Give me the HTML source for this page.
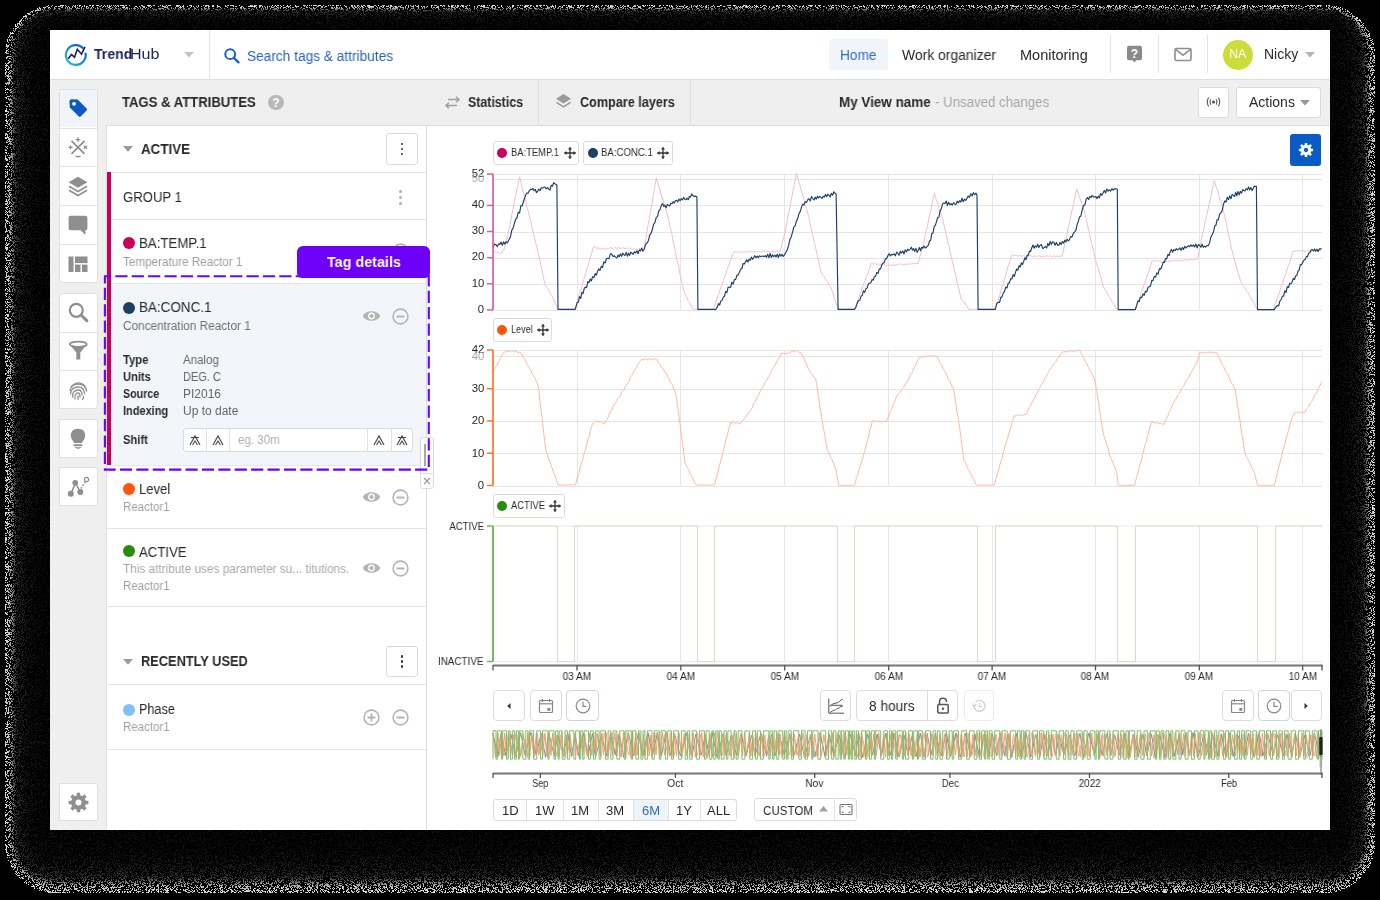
<!DOCTYPE html>
<html><head><meta charset="utf-8">
<style>
*{box-sizing:border-box;margin:0;padding:0}
html,body{width:1380px;height:900px;overflow:hidden;background:#000}
body{font-family:"Liberation Sans",sans-serif;position:relative}
#bg{position:absolute;left:0;top:0}
.r{position:absolute}
.t{position:absolute;white-space:nowrap;line-height:1;will-change:transform}
svg{position:absolute;overflow:visible}
</style></head><body>
<canvas id="bg" width="1380" height="900"></canvas>
<div class="r" style="left:50px;top:30px;width:1280px;height:800px;background:#fff"></div>
<div class="r" style="left:50px;top:79px;width:1280px;height:1px;background:#dedede"></div>
<div class="r" style="left:209px;top:30px;width:1px;height:49px;background:#e3e3e3"></div>
<div class="r" style="left:1110px;top:35px;width:1px;height:38px;background:#e3e3e3"></div>
<div class="r" style="left:1158px;top:35px;width:1px;height:38px;background:#e3e3e3"></div>
<div class="r" style="left:1207px;top:35px;width:1px;height:38px;background:#e3e3e3"></div>
<div class="r" style="left:829px;top:39px;width:59px;height:31px;background:#f1f5fa;border-radius:3px"></div>
<div class="r" style="left:50px;top:80px;width:57px;height:750px;background:#efefef"></div>
<div class="r" style="left:107px;top:80px;width:320px;height:45px;background:#efefef"></div>
<div class="r" style="left:106px;top:125px;width:321px;height:705px;background:#fff;border-left:1px solid #e2e2e2;border-right:1px solid #dcdcdc;border-top:1px solid #e0e0e0"></div>
<div class="r" style="left:427px;top:80px;width:903px;height:46px;background:#efefef;border-bottom:1px solid #dcdcdc"></div>
<div class="r" style="left:538px;top:80px;width:1px;height:45px;background:#dcdcdc"></div>
<div class="r" style="left:690px;top:80px;width:1px;height:45px;background:#dcdcdc"></div>
<svg style="left:62px;top:40px" width="28" height="28" viewBox="0 0 28 28"><defs><linearGradient id="lg" x1="0" y1="1" x2="1" y2="0"><stop offset="0" stop-color="#22c0e8"/><stop offset="1" stop-color="#1450b8"/></linearGradient></defs>
    <path d="M21.4 8.6 A9.9 9.9 0 1 0 23.5 12.8" fill="none" stroke="url(#lg)" stroke-width="2.1"/>
    <polyline points="6.3,18.7 9.5,14.5 12.5,17.3 15.3,9.3 19.5,14.2 23,6.8" fill="none" stroke="#1f1a5e" stroke-width="1.55" stroke-linejoin="miter"/></svg>
<svg style="left:184px;top:52px" width="10" height="6" viewBox="0 0 10 6"><path d="M0 0H10L5 5.5Z" fill="#c4c4c4"/></svg>
<svg style="left:224px;top:48px" width="16" height="15" viewBox="0 0 16 15"><circle cx="6.2" cy="6.2" r="4.9" fill="none" stroke="#1a64c0" stroke-width="2"/><path d="M9.8 9.8L14.5 14.3" stroke="#1a64c0" stroke-width="2.4" stroke-linecap="round"/></svg>
<svg style="left:1126px;top:45px" width="17" height="19" viewBox="0 0 17 19"><rect x="1" y="0.8" width="15" height="14.5" rx="2" fill="#8a8a8a"/><path d="M6.5 15H10.5L8.5 17.6Z" fill="#8a8a8a"/><text x="8.5" y="12.6" font-family="Liberation Sans" font-weight="bold" font-size="12" fill="#fff" text-anchor="middle">?</text></svg>
<svg style="left:1174px;top:47px" width="18" height="15" viewBox="0 0 18 15"><rect x="1" y="1.5" width="16" height="12" rx="1.5" fill="none" stroke="#8f8f8f" stroke-width="1.6"/><path d="M1.8 2.6L9 8.2L16.2 2.6" fill="none" stroke="#8f8f8f" stroke-width="1.6"/></svg>
<div class="r" style="left:1223.00px;top:39.50px;width:30px;height:30px;border-radius:50%;background:#cddc3a"></div>
<svg style="left:1305px;top:51.5px" width="10" height="6" viewBox="0 0 10 6"><path d="M0 0H10L5 5.5Z" fill="#b4b4b4"/></svg>
<div class="r" style="left:58.5px;top:88.6px;width:39.00px;height:194.50px;background:#fff;border:1px solid #e0e0e0;border-radius:3px"></div><div class="r" style="left:59px;top:127.5px;width:38.00px;height:1.00px;background:#e4e4e4"></div><div class="r" style="left:59px;top:166.39999999999998px;width:38.00px;height:1.00px;background:#e4e4e4"></div><div class="r" style="left:59px;top:205.29999999999998px;width:38.00px;height:1.00px;background:#e4e4e4"></div><div class="r" style="left:59px;top:244.2px;width:38.00px;height:1.00px;background:#e4e4e4"></div>
<div class="r" style="left:59.5px;top:89.6px;width:37.00px;height:37.90px;background:#f1f5fa;border-radius:2px 2px 0 0"></div>
<div class="r" style="left:58.5px;top:292.8px;width:39.00px;height:116.19px;background:#fff;border:1px solid #e0e0e0;border-radius:3px"></div><div class="r" style="left:59px;top:331.53000000000003px;width:38.00px;height:1.00px;background:#e4e4e4"></div><div class="r" style="left:59px;top:370.26px;width:38.00px;height:1.00px;background:#e4e4e4"></div>
<div class="r" style="left:58.5px;top:418.5px;width:39.00px;height:39.00px;background:#fff;border:1px solid #e0e0e0;border-radius:3px"></div>
<div class="r" style="left:58.5px;top:466.5px;width:39.00px;height:39.00px;background:#fff;border:1px solid #e0e0e0;border-radius:3px"></div>
<div class="r" style="left:58.5px;top:783px;width:39.00px;height:38.00px;background:#fff;border:1px solid #e0e0e0;border-radius:3px"></div>
<svg style="left:68px;top:98px" width="20" height="21" viewBox="0 0 20 21"><path d="M1.5 3.2 Q1.5 1.2 3.5 1.2 L9.6 1.4 L18.6 10.6 Q19.4 11.5 18.6 12.4 L12.6 18.6 Q11.7 19.5 10.8 18.6 L1.8 9.5 Z" fill="#0a5cc2"/><circle cx="6" cy="5.8" r="1.9" fill="#fff"/></svg>
<svg style="left:68px;top:137px" width="20" height="21" viewBox="0 0 20 21"><path d="M3.5 3.8L16.5 16.8M16.5 3.8L3.5 16.8" stroke="#8f8f8f" stroke-width="1.7"/><path d="M10 0.3V5M7.7 2.6H12.3M0.5 10.3H4.5M2.5 8.3V12.3M7.5 19.5H12.5M15.8 8.6L19 11.8M19 8.6L15.8 11.8" stroke="#8f8f8f" stroke-width="1.3"/></svg>
<svg style="left:68px;top:176px" width="20" height="21" viewBox="0 0 20 21"><path d="M10 0.8L19.4 6.3L10 11.8L0.6 6.3Z" fill="#8f8f8f"/><path d="M1 10.3L10 15.5L19 10.3" fill="none" stroke="#8f8f8f" stroke-width="1.6"/><path d="M1 14.3L10 19.5L19 14.3" fill="none" stroke="#8f8f8f" stroke-width="1.6"/></svg>
<svg style="left:68px;top:215px" width="20" height="21" viewBox="0 0 20 21"><path d="M2.5 0.8H17.5Q19.4 0.8 19.4 2.7V13.3Q19.4 15.2 17.5 15.2H17.4V20L12.6 15.2H2.5Q0.6 15.2 0.6 13.3V2.7Q0.6 0.8 2.5 0.8Z" fill="#8f8f8f"/></svg>
<svg style="left:68px;top:256px" width="20" height="17" viewBox="0 0 20 17"><rect x="0.5" y="0.5" width="5" height="15.5" fill="#8f8f8f"/><rect x="7" y="0.5" width="12.5" height="6.6" fill="#8f8f8f"/><rect x="7" y="8.6" width="5.5" height="7.4" fill="#8f8f8f"/><rect x="14" y="8.6" width="5.5" height="7.4" fill="#8f8f8f"/></svg>
<svg style="left:68px;top:302px" width="21" height="21" viewBox="0 0 21 21"><circle cx="8.3" cy="8.3" r="6.5" fill="none" stroke="#8f8f8f" stroke-width="2.2"/><path d="M13 13L18.8 18.6" stroke="#8f8f8f" stroke-width="3" stroke-linecap="round"/></svg>
<svg style="left:68px;top:341px" width="21" height="20" viewBox="0 0 21 20"><ellipse cx="10.3" cy="3.2" rx="8.5" ry="2.6" fill="#fff" stroke="#8f8f8f" stroke-width="1.8"/><path d="M1.8 3.5L8.3 11.5V18.5H12.3V11.5L18.8 3.5Q10.3 8 1.8 3.5Z" fill="#8f8f8f"/></svg>
<svg style="left:68px;top:380px" width="21" height="21" viewBox="0 0 21 21"><g fill="none" stroke="#8f8f8f" stroke-width="1.3" stroke-linecap="round"><path d="M3.5 6.5Q10 -0.5 17 6"/><path d="M2 10.5Q3 4 10.3 4Q17.5 4 18.5 11"/><path d="M2.5 14Q3 7 10.3 7Q16 7 16.5 13.5"/><path d="M4.5 17Q4.5 10 10.3 10Q14 10 14 15"/><path d="M7 19Q6.5 13 10.3 13Q12 13 12 17"/><path d="M10 16V19.5"/><path d="M15.5 16.5Q15.5 18.5 14.5 19.5"/></g></svg>
<svg style="left:69px;top:428px" width="18" height="21" viewBox="0 0 18 21"><path d="M9 0.8Q16.2 0.8 16.2 7.8Q16.2 11 13.3 13.8V15H4.7V13.8Q1.8 11 1.8 7.8Q1.8 0.8 9 0.8Z" fill="#8f8f8f"/><rect x="4.7" y="16.2" width="8.6" height="2" fill="#8f8f8f"/><path d="M4.7 19.2H13.3L9 21Z" fill="#8f8f8f"/></svg>
<svg style="left:67px;top:476px" width="23" height="22" viewBox="0 0 23 22"><path d="M8.5 7L4 17.5M8.5 7L13 15.5" stroke="#8f8f8f" stroke-width="1.6"/><path d="M14 12.5L18.5 5.5" stroke="#8f8f8f" stroke-width="1.5" stroke-dasharray="1.6 1.6"/><circle cx="8.2" cy="6.8" r="2.8" fill="#8f8f8f"/><circle cx="3.8" cy="17.8" r="3" fill="#8f8f8f"/><circle cx="13.3" cy="16" r="3" fill="#8f8f8f"/><circle cx="19.5" cy="3.5" r="2.1" fill="#fff" stroke="#8f8f8f" stroke-width="1.2"/></svg>
<svg style="left:68px;top:792px" width="21" height="21" viewBox="0 0 21 21"><path d="M17.69 8.74 L20.36 8.81 L20.36 12.19 L17.69 12.26 L16.83 14.34 L18.67 16.27 L16.27 18.67 L14.34 16.83 L12.26 17.69 L12.19 20.36 L8.81 20.36 L8.74 17.69 L6.66 16.83 L4.73 18.67 L2.33 16.27 L4.17 14.34 L3.31 12.26 L0.64 12.19 L0.64 8.81 L3.31 8.74 L4.17 6.66 L2.33 4.73 L4.73 2.33 L6.66 4.17 L8.74 3.31 L8.81 0.64 L12.19 0.64 L12.26 3.31 L14.34 4.17 L16.27 2.33 L18.67 4.73 L16.83 6.66Z" fill="#8f8f8f"/><circle cx="10.5" cy="10.5" r="6.00" fill="#8f8f8f"/><circle cx="10.5" cy="10.5" r="3.00" fill="#fff"/></svg>
<div class="r" style="left:268.05px;top:94.75px;width:15.5px;height:15.5px;border-radius:50%;background:#b8b8b8"></div>
<svg style="left:268px;top:95px" width="16" height="16" viewBox="0 0 16 16"><text x="8" y="12.3" font-family="Liberation Sans" font-weight="bold" font-size="12" fill="#fff" text-anchor="middle">?</text></svg>
<div class="r" style="left:107px;top:172px;width:319.00px;height:1.00px;background:#e6e6e6"></div>
<div class="r" style="left:107px;top:219px;width:319.00px;height:1.00px;background:#e6e6e6"></div>
<div class="r" style="left:107px;top:283px;width:319.00px;height:1.00px;background:#e6e6e6"></div>
<div class="r" style="left:107px;top:528px;width:319.00px;height:1.00px;background:#e6e6e6"></div>
<div class="r" style="left:107px;top:606px;width:319.00px;height:1.00px;background:#e6e6e6"></div>
<div class="r" style="left:107px;top:684px;width:319.00px;height:1.00px;background:#e6e6e6"></div>
<div class="r" style="left:107px;top:749px;width:319.00px;height:1.00px;background:#e6e6e6"></div>
<div class="r" style="left:107px;top:283.5px;width:319.00px;height:181.50px;background:#f2f5f9"></div>
<div class="r" style="left:107px;top:465px;width:319.00px;height:1.00px;background:#e6e6e6"></div>
<div class="r" style="left:107px;top:172px;width:4.00px;height:293.00px;background:#c8005a"></div>
<svg style="left:123px;top:145.5px" width="10" height="6" viewBox="0 0 10 6"><path d="M0 0H10L5 5.8Z" fill="#9a9a9a"/></svg>
<svg style="left:123px;top:659px" width="10" height="6" viewBox="0 0 10 6"><path d="M0 0H10L5 5.8Z" fill="#9a9a9a"/></svg>
<div class="r" style="left:386.3px;top:133.4px;width:31.40px;height:31.40px;background:#fff;border:1px solid #dadada;border-radius:3px"></div>
<div class="r" style="left:400.65px;top:142.75px;width:2.7px;height:2.7px;border-radius:50%;background:#333"></div>
<div class="r" style="left:400.65px;top:147.75px;width:2.7px;height:2.7px;border-radius:50%;background:#333"></div>
<div class="r" style="left:400.65px;top:152.75px;width:2.7px;height:2.7px;border-radius:50%;background:#333"></div>
<div class="r" style="left:386.3px;top:645.6px;width:31.40px;height:31.40px;background:#fff;border:1px solid #dadada;border-radius:3px"></div>
<div class="r" style="left:400.65px;top:654.95px;width:2.7px;height:2.7px;border-radius:50%;background:#333"></div>
<div class="r" style="left:400.65px;top:659.95px;width:2.7px;height:2.7px;border-radius:50%;background:#333"></div>
<div class="r" style="left:400.65px;top:664.95px;width:2.7px;height:2.7px;border-radius:50%;background:#333"></div>
<div class="r" style="left:398.50px;top:189.50px;width:3.0px;height:3.0px;border-radius:50%;background:#b0b0b0"></div>
<div class="r" style="left:398.50px;top:195.50px;width:3.0px;height:3.0px;border-radius:50%;background:#b0b0b0"></div>
<div class="r" style="left:398.50px;top:201.50px;width:3.0px;height:3.0px;border-radius:50%;background:#b0b0b0"></div>
<div class="r" style="left:123.00px;top:237.30px;width:12px;height:12px;border-radius:50%;background:#c8005a"></div>
<div class="r" style="left:123.00px;top:301.50px;width:12px;height:12px;border-radius:50%;background:#1d3f66"></div>
<div class="r" style="left:123.00px;top:483.30px;width:12px;height:12px;border-radius:50%;background:#ff5510"></div>
<div class="r" style="left:123.00px;top:545.00px;width:12px;height:12px;border-radius:50%;background:#2b8a10"></div>
<div class="r" style="left:123.00px;top:703.60px;width:12px;height:12px;border-radius:50%;background:#80c0f6"></div>
<svg style="left:391.5px;top:242.5px" width="17" height="17" viewBox="0 0 17 17"><circle cx="8.5" cy="8.5" r="7.4" fill="none" stroke="#b4b4b4" stroke-width="1.6"/><path d="M4.6 8.5H12.4" stroke="#b4b4b4" stroke-width="2"/></svg>
<svg style="left:362.0px;top:310px" width="19" height="12" viewBox="0 0 19 12"><path d="M0.8 6C3.5 -0.3 15.5 -0.3 18.2 6C15.5 12.3 3.5 12.3 0.8 6Z" fill="#b4b4b4"/><circle cx="9.5" cy="6" r="3.4" fill="#fff"/><circle cx="9.5" cy="6" r="2.1" fill="#b4b4b4"/></svg>
<svg style="left:391.5px;top:307.5px" width="17" height="17" viewBox="0 0 17 17"><circle cx="8.5" cy="8.5" r="7.4" fill="none" stroke="#b4b4b4" stroke-width="1.6"/><path d="M4.6 8.5H12.4" stroke="#b4b4b4" stroke-width="2"/></svg>
<svg style="left:362.0px;top:491.2px" width="19" height="12" viewBox="0 0 19 12"><path d="M0.8 6C3.5 -0.3 15.5 -0.3 18.2 6C15.5 12.3 3.5 12.3 0.8 6Z" fill="#b4b4b4"/><circle cx="9.5" cy="6" r="3.4" fill="#fff"/><circle cx="9.5" cy="6" r="2.1" fill="#b4b4b4"/></svg>
<svg style="left:391.5px;top:488.5px" width="17" height="17" viewBox="0 0 17 17"><circle cx="8.5" cy="8.5" r="7.4" fill="none" stroke="#b4b4b4" stroke-width="1.6"/><path d="M4.6 8.5H12.4" stroke="#b4b4b4" stroke-width="2"/></svg>
<svg style="left:362.0px;top:562px" width="19" height="12" viewBox="0 0 19 12"><path d="M0.8 6C3.5 -0.3 15.5 -0.3 18.2 6C15.5 12.3 3.5 12.3 0.8 6Z" fill="#b4b4b4"/><circle cx="9.5" cy="6" r="3.4" fill="#fff"/><circle cx="9.5" cy="6" r="2.1" fill="#b4b4b4"/></svg>
<svg style="left:391.5px;top:559.5px" width="17" height="17" viewBox="0 0 17 17"><circle cx="8.5" cy="8.5" r="7.4" fill="none" stroke="#b4b4b4" stroke-width="1.6"/><path d="M4.6 8.5H12.4" stroke="#b4b4b4" stroke-width="2"/></svg>
<svg style="left:363.0px;top:709.2px" width="17" height="17" viewBox="0 0 17 17"><circle cx="8.5" cy="8.5" r="7.4" fill="none" stroke="#b4b4b4" stroke-width="1.6"/><path d="M4.6 8.5H12.4M8.5 4.6V12.4" stroke="#b4b4b4" stroke-width="1.8"/></svg>
<svg style="left:391.5px;top:709.2px" width="17" height="17" viewBox="0 0 17 17"><circle cx="8.5" cy="8.5" r="7.4" fill="none" stroke="#b4b4b4" stroke-width="1.6"/><path d="M4.6 8.5H12.4" stroke="#b4b4b4" stroke-width="2"/></svg>
<div class="r" style="left:183.3px;top:428.3px;width:230.20px;height:23.40px;background:#fff;border:1px solid #dcdcdc;border-radius:3px"></div>
<div class="r" style="left:206.4px;top:429px;width:1.00px;height:22.00px;background:#e2e2e2"></div>
<div class="r" style="left:229.3px;top:429px;width:1.00px;height:22.00px;background:#e2e2e2"></div>
<div class="r" style="left:367.2px;top:429px;width:1.00px;height:22.00px;background:#e2e2e2"></div>
<div class="r" style="left:390.6px;top:429px;width:1.00px;height:22.00px;background:#e2e2e2"></div>
<svg style="left:187.8px;top:433px" width="14" height="14" viewBox="0 0 14 14"><path d="M2 12L7 3L12 12M4.5 12L7 8L9.5 12" fill="none" stroke="#444" stroke-width="1.1"/><path d="M3 4.5H11" stroke="#444" stroke-width="1.1"/></svg>
<svg style="left:210.8px;top:433px" width="14" height="14" viewBox="0 0 14 14"><path d="M2 12L7 3L12 12M4.5 12L7 8L9.5 12" fill="none" stroke="#444" stroke-width="1.1"/></svg>
<svg style="left:371.9px;top:433px" width="14" height="14" viewBox="0 0 14 14"><path d="M2 12L7 3L12 12M4.5 12L7 8L9.5 12" fill="none" stroke="#444" stroke-width="1.1"/></svg>
<svg style="left:395px;top:433px" width="14" height="14" viewBox="0 0 14 14"><path d="M2 12L7 3L12 12M4.5 12L7 8L9.5 12" fill="none" stroke="#444" stroke-width="1.1"/><path d="M3 4.5H11" stroke="#444" stroke-width="1.1"/></svg>
<div class="r" style="left:297px;top:245.8px;width:132.50px;height:32.00px;background:#6e00f8;border-radius:6px 6px 5px 5px"></div>
<div class="r" style="left:419.5px;top:437.4px;width:14.70px;height:51.40px;background:#fff;border:1px solid #dcdcdc;border-radius:3px"></div>
<div class="r" style="left:420px;top:472.6px;width:14.00px;height:1.00px;background:#e0e0e0"></div>
<div class="r" style="left:423.8px;top:444px;width:2.40px;height:22.00px;background:#a8a8a8"></div>
<svg style="left:423px;top:477px" width="8" height="8" viewBox="0 0 8 8"><path d="M1 1L7 7M7 1L1 7" stroke="#999" stroke-width="1.1"/></svg>
<svg style="left:0px;top:0px" width="1380" height="900" viewBox="0 0 1380 900"><rect x="104.9" y="276.2" width="323.9" height="193.4" fill="none" stroke="#6c00ff" stroke-width="2.1" stroke-dasharray="12.2 4.2" stroke-dashoffset="6"/></svg>
<svg style="left:444px;top:96px" width="17" height="13" viewBox="0 0 17 13"><path d="M4 3.5H15M12 0.8L15 3.5L12 6.2" fill="none" stroke="#a0a0a0" stroke-width="1.5"/><path d="M13 9.5H2M5 6.8L2 9.5L5 12.2" fill="none" stroke="#a0a0a0" stroke-width="1.5"/></svg>
<svg style="left:555px;top:93px" width="17" height="17" viewBox="0 0 17 17"><path d="M8.5 1L16 5.8L8.5 10.6L1 5.8Z" fill="#9a9a9a"/><path d="M1.5 9.3L8.5 13.8L15.5 9.3" fill="none" stroke="#9a9a9a" stroke-width="1.6"/></svg>
<div class="r" style="left:1197.7px;top:87.3px;width:31.10px;height:30.40px;background:#fff;border:1px solid #dcdcdc;border-radius:3px"></div>
<svg style="left:1206px;top:96px" width="15" height="12" viewBox="0 0 15 12"><circle cx="7.5" cy="6" r="1.6" fill="#555"/><path d="M4.8 3.3Q3.2 6 4.8 8.7M10.2 3.3Q11.8 6 10.2 8.7M2.6 1.5Q0 6 2.6 10.5M12.4 1.5Q15 6 12.4 10.5" fill="none" stroke="#555" stroke-width="1.1"/></svg>
<div class="r" style="left:1236px;top:87.3px;width:85.00px;height:30.40px;background:#fff;border:1px solid #dcdcdc;border-radius:3px"></div>
<svg style="left:1300px;top:100px" width="10" height="6" viewBox="0 0 10 6"><path d="M0 0H10L5 5.5Z" fill="#9a9a9a"/></svg>
<div class="r" style="left:1290.3px;top:134px;width:31.10px;height:32.00px;background:#0a5bc4;border-radius:3px"></div>
<svg style="left:1298px;top:142px" width="16" height="16" viewBox="0 0 16 16"><path d="M13.18 6.73 L15.10 6.78 L15.10 9.22 L13.18 9.27 L12.56 10.76 L13.88 12.16 L12.16 13.88 L10.76 12.56 L9.27 13.18 L9.22 15.10 L6.78 15.10 L6.73 13.18 L5.24 12.56 L3.84 13.88 L2.12 12.16 L3.44 10.76 L2.82 9.27 L0.90 9.22 L0.90 6.78 L2.82 6.73 L3.44 5.24 L2.12 3.84 L3.84 2.12 L5.24 3.44 L6.73 2.82 L6.78 0.90 L9.22 0.90 L9.27 2.82 L10.76 3.44 L12.16 2.12 L13.88 3.84 L12.56 5.24Z" fill="#fff"/><circle cx="8" cy="8" r="4.32" fill="#fff"/><circle cx="8" cy="8" r="2.16" fill="#0a5bc4"/></svg>
<svg style="left:0;top:0" width="1380" height="900"><path d="M493 310.5H1322" stroke="#e6e6e6" stroke-width="1"/><path d="M493 284.5H1322" stroke="#e6e6e6" stroke-width="1"/><path d="M493 258.5H1322" stroke="#e6e6e6" stroke-width="1"/><path d="M493 232.5H1322" stroke="#e6e6e6" stroke-width="1"/><path d="M493 205.5H1322" stroke="#e6e6e6" stroke-width="1"/><path d="M493 179.5H1322" stroke="#e6e6e6" stroke-width="1"/><path d="M493 174.5H1322" stroke="#e6e6e6" stroke-width="1"/><path d="M577.5 174.0V310" stroke="#e6e6e6" stroke-width="1"/><path d="M680.5 174.0V310" stroke="#e6e6e6" stroke-width="1"/><path d="M784.5 174.0V310" stroke="#e6e6e6" stroke-width="1"/><path d="M888.5 174.0V310" stroke="#e6e6e6" stroke-width="1"/><path d="M992.5 174.0V310" stroke="#e6e6e6" stroke-width="1"/><path d="M1095.5 174.0V310" stroke="#e6e6e6" stroke-width="1"/><path d="M1199.5 174.0V310" stroke="#e6e6e6" stroke-width="1"/><path d="M1302.5 174.0V310" stroke="#e6e6e6" stroke-width="1"/><path d="M493.0 251.2 L494.7 251.3 L496.3 252.7 L497.9 251.7 L499.5 253.1 L501.2 253.2 L504.2 249.1 L506.2 240.5 L508.3 232.9 L510.1 224.1 L512.0 213.7 L513.8 205.7 L515.7 195.5 L517.6 186.6 L519.4 177.1 L521.3 183.7 L523.1 192.1 L525.0 198.3 L526.8 206.4 L528.7 213.0 L530.6 220.7 L532.2 228.3 L533.8 234.2 L535.4 242.2 L537.1 247.6 L538.7 255.2 L540.7 264.9 L542.7 273.9 L544.8 283.6 L546.4 287.0 L548.0 288.5 L549.6 292.6 L551.3 294.6 L552.9 297.8 L554.6 302.1 L556.3 305.3 L558.0 309.4 L559.7 309.4 L561.4 309.4 L563.1 309.4 L564.8 309.4 L566.6 309.4 L568.3 309.4 L570.0 309.4 L571.7 309.4 L573.5 309.4 L575.2 309.4 L577.2 301.9 L578.8 296.7 L580.5 290.5 L582.1 285.9 L583.7 279.6 L585.3 274.8 L587.0 268.7 L588.6 264.0 L590.2 257.7 L591.8 252.8 L593.4 247.1 L595.1 246.8 L596.7 248.5 L598.3 247.7 L599.9 249.0 L601.6 249.1 L603.3 248.2 L604.9 249.5 L606.6 248.4 L608.3 248.9 L610.0 247.7 L611.7 248.1 L613.4 248.7 L615.1 247.4 L616.8 248.6 L618.5 247.4 L620.2 248.7 L621.8 248.1 L623.6 247.9 L625.4 248.9 L627.2 247.8 L628.9 249.3 L630.7 248.3 L632.5 249.4 L634.3 248.8 L636.0 249.1 L637.7 249.3 L639.3 248.1 L640.9 249.0 L642.5 248.0 L644.2 248.1 L645.9 238.7 L647.6 227.5 L649.4 218.7 L651.1 207.7 L652.9 198.6 L654.6 187.6 L656.3 178.1 L658.1 184.6 L659.8 189.2 L661.5 196.0 L663.3 200.8 L665.0 207.3 L666.8 212.7 L668.5 218.7 L670.1 227.2 L671.8 233.6 L673.4 242.8 L675.1 249.7 L676.7 258.3 L678.4 265.4 L680.0 274.5 L681.7 281.6 L684.7 293.8 L686.3 296.1 L688.0 300.4 L689.6 302.2 L691.2 306.3 L692.8 309.0 L694.9 309.2 L696.9 309.4 L698.5 309.4 L700.1 309.4 L701.8 309.4 L703.4 309.4 L705.0 309.4 L706.6 309.4 L708.3 309.4 L709.9 309.4 L711.5 309.4 L713.1 309.4 L715.2 303.9 L716.8 298.7 L718.5 295.3 L720.1 289.2 L721.8 285.6 L723.5 280.0 L725.1 276.2 L726.8 270.2 L728.4 266.5 L730.1 260.9 L731.7 257.6 L733.4 252.2 L735.1 251.4 L736.7 252.7 L738.4 251.3 L740.1 252.5 L741.8 251.4 L743.4 252.3 L745.1 251.6 L746.8 252.5 L748.4 251.2 L750.1 252.0 L751.8 251.2 L753.5 252.1 L755.1 251.1 L756.8 251.9 L758.5 250.9 L760.1 252.0 L761.8 251.4 L763.5 250.8 L765.2 251.8 L766.8 251.1 L768.5 251.6 L770.2 251.0 L771.9 251.8 L773.6 250.5 L775.2 251.9 L776.9 250.5 L778.6 251.9 L780.3 251.2 L782.3 242.7 L784.3 234.9 L786.1 226.8 L787.8 216.7 L789.6 208.7 L791.3 199.4 L793.0 191.0 L794.8 181.3 L796.5 173.1 L798.2 179.7 L800.0 185.3 L801.7 192.3 L803.5 197.6 L805.2 204.5 L806.9 210.2 L808.7 216.7 L810.4 225.0 L812.2 232.0 L813.9 240.5 L815.6 247.3 L817.4 256.3 L819.1 263.2 L820.9 271.4 L822.5 274.6 L824.2 276.6 L825.9 280.0 L827.6 281.8 L829.3 285.3 L831.0 287.7 L832.8 292.8 L834.5 299.3 L836.3 303.4 L838.1 309.4 L839.8 309.4 L841.5 309.4 L843.3 309.4 L845.0 309.4 L846.7 309.4 L848.4 309.4 L850.2 309.4 L851.9 309.4 L853.6 309.4 L855.3 309.4 L856.3 303.9 L858.0 299.7 L859.7 294.3 L861.4 291.1 L863.1 285.7 L864.8 281.6 L866.5 276.6 L868.2 273.0 L869.9 267.5 L871.6 263.3 L873.2 264.2 L874.8 263.1 L876.4 264.5 L878.1 263.8 L879.7 265.1 L881.3 263.9 L882.9 265.3 L884.5 264.6 L886.2 265.7 L887.8 265.4 L889.6 264.8 L891.3 265.7 L893.1 264.6 L894.9 265.4 L896.7 264.5 L898.4 265.0 L900.2 263.7 L902.0 264.3 L903.6 265.0 L905.2 263.8 L906.9 264.8 L908.5 263.6 L910.1 264.6 L911.7 263.1 L913.3 264.1 L915.0 263.2 L916.6 263.6 L918.2 263.3 L920.2 255.5 L922.3 249.1 L924.0 241.4 L925.7 232.5 L927.5 226.0 L929.2 216.7 L931.0 209.6 L932.7 200.6 L934.4 193.4 L936.1 199.2 L937.7 202.9 L939.3 209.1 L940.9 213.2 L942.6 218.7 L944.2 226.3 L945.9 232.8 L947.5 240.9 L949.2 247.0 L950.9 255.0 L952.5 261.6 L954.2 269.7 L955.8 275.9 L957.5 283.9 L959.2 290.2 L960.8 297.8 L962.4 300.9 L964.1 301.7 L965.7 305.0 L967.3 306.7 L968.9 309.4 L970.6 309.4 L972.2 309.4 L973.9 309.4 L975.5 309.4 L977.2 309.4 L978.8 309.4 L980.5 309.4 L982.1 309.4 L983.8 309.4 L985.4 309.4 L987.1 309.4 L988.7 309.4 L990.3 309.4 L992.0 309.4 L993.6 309.4 L995.3 309.4 L998.3 299.8 L1000.0 294.7 L1001.6 287.9 L1003.3 283.8 L1004.9 277.1 L1006.6 272.3 L1008.2 265.8 L1009.9 261.5 L1011.5 255.2 L1013.2 254.5 L1014.9 255.8 L1016.6 254.7 L1018.3 256.2 L1020.0 255.2 L1021.7 256.5 L1023.4 255.5 L1025.0 256.5 L1026.7 255.7 L1028.4 256.4 L1030.1 255.4 L1031.8 256.2 L1033.4 256.6 L1035.1 255.6 L1036.7 256.8 L1038.4 255.5 L1040.0 256.3 L1041.7 256.7 L1043.4 255.8 L1045.1 256.6 L1046.8 255.5 L1048.5 256.8 L1050.2 255.5 L1051.9 257.0 L1053.6 256.0 L1055.3 256.8 L1057.0 256.0 L1058.7 256.5 L1060.4 256.0 L1062.1 256.3 L1063.7 249.5 L1065.3 240.6 L1067.0 234.5 L1068.6 226.0 L1070.2 219.5 L1071.9 210.8 L1073.5 204.4 L1075.1 195.9 L1076.8 189.0 L1078.6 194.6 L1080.4 199.3 L1082.3 205.1 L1084.1 210.0 L1085.9 217.0 L1087.6 226.0 L1089.4 232.4 L1091.1 241.3 L1092.9 248.2 L1094.6 256.3 L1096.3 262.8 L1098.0 267.3 L1099.7 274.1 L1101.4 279.2 L1103.0 285.7 L1104.8 289.1 L1106.6 291.7 L1108.4 295.9 L1110.2 298.1 L1112.0 301.8 L1113.8 303.8 L1115.6 307.7 L1117.7 309.8 L1119.4 309.8 L1121.1 309.8 L1122.8 309.8 L1124.5 309.8 L1126.2 309.8 L1127.8 309.8 L1129.5 309.8 L1131.2 309.8 L1132.9 309.8 L1134.6 309.8 L1136.7 305.6 L1138.8 300.4 L1140.5 295.1 L1142.2 290.7 L1143.9 285.1 L1145.6 281.1 L1147.3 275.2 L1149.0 271.2 L1150.7 265.0 L1152.4 260.5 L1154.1 261.4 L1155.8 260.0 L1157.5 261.2 L1159.2 260.6 L1161.0 261.6 L1162.7 261.0 L1164.4 262.0 L1166.1 261.5 L1167.7 261.2 L1169.4 261.5 L1171.1 260.4 L1172.7 261.4 L1174.4 260.4 L1176.0 261.3 L1177.7 260.3 L1179.3 260.9 L1181.0 259.8 L1182.7 261.2 L1184.3 259.5 L1186.0 260.4 L1187.6 259.7 L1189.3 260.5 L1191.0 259.1 L1192.6 260.3 L1194.3 259.0 L1195.9 260.1 L1197.6 259.4 L1199.7 248.0 L1201.8 237.3 L1203.6 229.8 L1205.4 220.7 L1207.2 213.4 L1209.0 204.7 L1210.8 197.2 L1212.6 187.9 L1214.4 180.6 L1216.1 186.5 L1217.8 190.9 L1219.4 197.6 L1221.1 201.7 L1222.8 207.9 L1224.6 216.4 L1226.3 223.7 L1228.1 232.5 L1229.8 239.8 L1231.6 248.9 L1233.3 256.3 L1235.2 261.8 L1237.0 269.2 L1238.8 274.8 L1240.7 281.5 L1242.6 284.9 L1244.5 286.8 L1246.3 290.9 L1248.2 292.9 L1250.1 296.2 L1252.0 299.8 L1253.8 302.7 L1255.6 306.7 L1257.5 309.8 L1259.2 309.8 L1261.0 309.8 L1262.7 309.8 L1264.5 309.8 L1266.2 309.8 L1268.0 309.8 L1269.7 309.8 L1271.5 309.8 L1273.2 309.8 L1275.3 303.5 L1277.4 298.3 L1279.2 293.3 L1280.9 287.5 L1282.7 283.1 L1284.4 276.9 L1286.2 272.7 L1288.0 266.3 L1289.7 262.2 L1291.5 256.0 L1293.2 251.0 L1294.9 251.5 L1296.5 250.3 L1298.2 251.2 L1299.9 250.2 L1301.5 251.3 L1303.2 250.3 L1304.9 251.8 L1306.6 250.3 L1308.2 251.4 L1309.9 250.7 L1311.6 251.5 L1313.2 250.2 L1314.9 251.4 L1316.6 250.3 L1318.2 251.3 L1319.9 250.3 L1321.6 251.0" fill="none" stroke="#f5b8cb" stroke-width="0.95" stroke-linejoin="round" /><path d="M493.0 247.6 L494.6 244.0 L496.1 244.7 L497.3 246.6 L498.6 243.9 L499.8 244.4 L501.0 242.0 L502.3 245.4 L503.5 241.9 L504.8 244.1 L506.0 241.7 L507.2 243.0 L509.3 239.1 L510.5 236.7 L511.8 230.1 L513.1 228.1 L514.3 223.7 L515.6 219.3 L516.9 218.0 L518.3 212.2 L519.6 212.9 L520.9 205.5 L522.2 205.9 L523.5 201.5 L525.5 195.4 L526.8 193.0 L528.0 193.2 L529.3 190.6 L530.6 189.3 L531.8 189.5 L532.9 188.4 L534.1 190.7 L535.3 189.3 L536.5 192.7 L537.7 191.1 L538.9 189.0 L540.1 190.6 L541.3 187.8 L542.5 188.1 L543.8 187.1 L545.0 187.0 L546.3 188.9 L547.6 187.6 L548.8 189.2 L550.0 190.1 L551.3 185.2 L552.5 186.2 L553.7 182.6 L554.9 183.7 L556.9 185.0 L558.0 309.4 L559.2 309.4 L560.4 309.4 L561.6 309.4 L562.9 309.4 L564.1 309.4 L565.3 309.4 L566.6 309.4 L567.8 309.4 L569.0 309.4 L570.3 309.4 L571.5 309.4 L572.7 309.4 L574.0 309.4 L575.2 309.4 L577.2 302.3 L578.4 302.1 L579.5 296.7 L580.7 298.3 L581.9 292.4 L583.0 293.6 L584.2 288.6 L585.3 287.2 L586.6 287.6 L587.8 281.6 L589.0 282.7 L590.2 279.0 L591.4 280.9 L592.6 276.7 L593.9 277.6 L595.1 273.6 L596.3 275.2 L597.5 271.6 L598.8 268.9 L600.0 270.4 L601.3 266.2 L602.6 267.5 L603.8 261.8 L605.1 263.0 L606.4 258.7 L607.6 258.2 L609.0 258.7 L610.4 253.7 L611.7 254.1 L613.1 256.5 L614.4 255.8 L615.8 257.5 L616.9 257.9 L618.1 255.1 L619.2 256.8 L620.4 253.9 L621.6 256.2 L622.7 253.1 L623.9 254.7 L625.0 255.4 L626.2 252.4 L627.4 256.1 L628.5 253.2 L629.7 255.4 L630.8 252.2 L632.0 253.2 L633.2 254.3 L634.4 251.8 L635.6 252.9 L636.9 250.8 L638.1 253.8 L639.3 249.8 L640.5 251.0 L641.7 248.2 L642.9 251.2 L644.2 249.3 L645.7 243.9 L647.2 242.9 L648.5 240.4 L649.7 234.9 L651.0 233.5 L652.3 229.5 L653.6 224.3 L654.9 222.7 L656.2 217.5 L657.5 216.6 L658.8 210.9 L660.1 209.4 L661.4 205.2 L662.6 203.6 L663.8 206.4 L664.9 205.2 L666.1 207.7 L667.3 204.5 L668.5 205.2 L669.7 205.9 L670.8 203.2 L672.0 203.7 L673.1 201.7 L674.3 203.1 L675.5 200.6 L676.6 200.3 L677.8 201.9 L678.9 199.1 L680.1 200.7 L681.2 198.7 L682.4 199.8 L683.6 197.4 L684.7 199.2 L685.9 199.6 L687.0 198.1 L688.2 199.7 L689.4 196.5 L690.5 197.0 L691.7 193.9 L692.8 195.6 L694.2 196.5 L695.5 196.1 L696.9 196.7 L697.9 309.4 L699.1 309.4 L700.2 309.4 L701.4 309.4 L702.5 309.4 L703.7 309.4 L704.9 309.4 L706.0 309.4 L707.2 309.4 L708.3 309.4 L709.5 309.4 L710.7 309.4 L711.8 309.4 L713.0 309.4 L714.1 309.4 L715.7 309.6 L717.2 307.1 L718.4 303.7 L719.6 305.0 L720.8 301.0 L722.0 300.4 L723.3 297.1 L724.5 296.3 L725.7 291.3 L726.9 292.6 L728.1 287.0 L729.4 287.3 L730.6 287.4 L731.9 282.2 L733.2 284.1 L734.4 279.6 L735.7 279.4 L737.0 275.0 L738.2 275.0 L739.5 271.9 L740.7 269.2 L741.9 268.6 L743.1 263.5 L744.4 264.0 L745.6 261.6 L746.7 259.9 L747.9 261.9 L749.1 259.2 L750.2 260.4 L751.4 257.1 L752.5 259.3 L753.7 257.8 L754.9 255.7 L756.0 257.7 L757.2 256.1 L758.3 257.6 L759.5 255.8 L760.6 256.6 L761.8 256.2 L763.0 256.0 L764.2 256.7 L765.4 255.6 L766.5 257.3 L767.7 254.4 L768.9 257.6 L770.1 253.3 L771.3 257.5 L772.5 254.8 L773.7 256.7 L774.9 255.0 L776.0 257.1 L777.2 254.3 L778.4 257.5 L779.6 254.0 L780.8 256.2 L782.0 254.3 L783.2 256.5 L784.3 255.2 L785.9 252.2 L787.4 249.4 L788.7 245.2 L789.9 239.6 L791.2 236.9 L792.5 232.4 L793.8 227.2 L795.1 225.9 L796.4 221.3 L797.7 218.6 L799.0 213.7 L800.3 211.3 L801.6 206.9 L802.8 204.1 L804.0 205.0 L805.2 201.6 L806.5 202.5 L807.7 199.6 L808.9 198.7 L810.2 201.0 L811.5 196.6 L812.7 198.5 L813.9 200.0 L815.1 197.1 L816.2 199.2 L817.4 196.4 L818.5 197.9 L819.7 196.4 L820.9 197.4 L822.0 198.4 L823.2 196.3 L824.3 196.9 L825.5 194.4 L826.6 196.7 L827.8 194.2 L829.0 195.2 L830.2 197.0 L831.4 193.3 L832.6 195.2 L833.8 191.8 L835.1 193.3 L836.1 194.0 L838.1 309.4 L839.3 309.4 L840.4 309.4 L841.6 309.4 L842.7 309.4 L843.9 309.4 L845.0 309.4 L846.2 309.4 L847.4 309.4 L848.5 309.4 L849.7 309.4 L850.8 309.4 L852.0 309.4 L853.2 309.4 L854.3 309.4 L855.8 307.4 L857.4 302.9 L858.6 300.5 L859.8 300.3 L861.0 296.3 L862.2 295.6 L863.4 290.9 L864.7 292.4 L865.9 288.7 L867.1 288.1 L868.3 284.0 L869.5 283.3 L870.8 282.9 L872.0 279.6 L873.2 280.1 L874.4 276.8 L875.6 276.1 L876.8 272.4 L878.1 273.4 L879.3 268.9 L880.5 269.0 L881.7 265.3 L882.9 262.9 L884.1 262.9 L885.4 258.7 L886.6 258.8 L887.8 255.8 L889.1 253.7 L890.3 256.0 L891.6 254.3 L892.9 254.9 L894.1 253.8 L895.4 255.8 L896.7 252.1 L897.9 253.3 L899.1 255.2 L900.4 251.3 L901.6 253.0 L902.8 251.0 L904.0 253.9 L905.2 249.8 L906.5 252.0 L907.7 249.1 L908.9 250.5 L910.1 249.0 L911.3 247.3 L912.4 250.1 L913.6 248.5 L914.7 251.4 L915.9 248.4 L917.1 252.3 L918.2 250.2 L919.4 247.5 L920.5 250.7 L921.7 247.3 L922.9 248.2 L924.0 246.0 L925.2 247.9 L926.3 247.4 L928.4 245.1 L929.5 241.0 L930.7 240.3 L931.8 233.3 L933.0 233.2 L934.2 226.6 L935.3 225.4 L936.5 221.6 L937.7 217.5 L938.9 217.2 L940.1 210.9 L941.3 208.7 L942.6 203.9 L943.8 203.0 L945.0 203.4 L946.2 201.1 L947.4 205.6 L948.6 202.3 L949.9 204.7 L951.1 203.7 L952.3 205.1 L953.5 202.7 L954.7 203.9 L955.9 204.6 L957.2 201.2 L958.4 202.9 L959.6 200.7 L960.8 202.0 L962.0 198.2 L963.2 201.7 L964.5 199.2 L965.7 200.4 L966.9 198.6 L968.2 196.1 L969.5 197.4 L970.8 193.8 L972.1 196.0 L973.4 192.6 L974.7 194.7 L976.0 193.1 L977.0 195.2 L978.1 309.4 L979.3 309.4 L980.5 309.4 L981.7 309.4 L983.0 309.4 L984.2 309.4 L985.4 309.4 L986.7 309.4 L987.9 309.4 L989.1 309.4 L990.4 309.4 L991.6 309.4 L992.8 309.4 L994.1 309.4 L995.3 309.4 L996.8 303.3 L998.3 302.4 L999.6 302.4 L1000.8 297.4 L1002.0 296.9 L1003.3 292.8 L1004.5 291.5 L1005.7 287.1 L1007.0 288.0 L1008.2 283.1 L1009.4 282.9 L1010.7 278.7 L1011.9 279.0 L1013.1 274.6 L1014.3 276.3 L1015.6 272.1 L1016.7 269.0 L1017.9 270.2 L1019.1 265.5 L1020.2 267.0 L1021.4 262.9 L1022.5 264.5 L1023.7 261.4 L1024.9 257.8 L1026.0 259.6 L1027.2 255.1 L1028.3 255.3 L1029.5 251.0 L1030.6 251.5 L1031.8 247.7 L1033.0 245.0 L1034.1 248.1 L1035.3 245.9 L1036.5 247.1 L1037.7 244.1 L1038.8 247.5 L1040.0 245.4 L1041.4 244.6 L1042.8 248.6 L1044.2 247.5 L1045.4 246.5 L1046.6 248.0 L1047.8 243.4 L1049.0 245.7 L1050.2 241.4 L1051.4 244.5 L1052.6 241.8 L1053.9 242.2 L1055.1 245.2 L1056.4 242.4 L1057.7 245.3 L1058.9 245.1 L1060.1 242.4 L1061.2 244.5 L1062.4 241.6 L1063.6 243.2 L1064.7 240.3 L1065.9 241.9 L1067.1 239.2 L1068.3 240.8 L1069.4 239.9 L1070.7 236.6 L1072.0 237.0 L1073.4 233.2 L1074.7 231.8 L1075.9 230.4 L1077.1 224.5 L1078.3 221.5 L1079.6 216.7 L1080.8 216.2 L1082.0 210.9 L1083.4 205.6 L1084.8 205.0 L1086.2 199.2 L1087.4 197.5 L1088.6 199.5 L1089.8 196.4 L1091.0 197.5 L1092.2 195.3 L1093.4 196.9 L1094.6 197.0 L1095.8 196.6 L1097.0 198.6 L1098.2 196.2 L1099.4 197.9 L1100.6 193.5 L1101.8 195.2 L1103.0 193.0 L1104.3 190.5 L1105.6 193.1 L1106.8 189.0 L1108.1 191.1 L1109.3 189.8 L1110.6 191.1 L1111.9 188.7 L1113.1 190.2 L1114.4 188.9 L1115.6 188.8 L1117.3 189.1 L1118.2 309.6 L1119.4 309.6 L1120.6 309.6 L1121.9 309.6 L1123.1 309.6 L1124.3 309.6 L1125.5 309.6 L1126.8 309.6 L1128.0 309.6 L1129.2 309.6 L1130.5 309.6 L1131.7 309.6 L1132.9 309.6 L1134.1 309.6 L1135.4 309.5 L1136.7 305.2 L1137.9 300.8 L1139.2 301.6 L1140.4 297.2 L1141.7 297.6 L1143.0 293.9 L1144.2 295.4 L1145.5 291.2 L1146.7 291.9 L1148.0 287.5 L1149.3 286.7 L1150.5 285.9 L1151.8 280.4 L1153.0 280.7 L1154.3 276.4 L1155.6 277.1 L1156.8 272.8 L1158.1 274.1 L1159.4 268.7 L1160.6 269.2 L1161.9 266.3 L1163.1 262.3 L1164.3 262.5 L1165.5 258.5 L1166.7 258.9 L1167.9 254.5 L1169.1 255.6 L1170.3 251.5 L1171.5 249.4 L1172.7 252.2 L1173.9 249.6 L1175.1 250.7 L1176.3 248.6 L1177.5 250.0 L1178.7 249.0 L1179.9 247.9 L1181.1 250.4 L1182.3 247.5 L1183.5 249.5 L1184.7 246.4 L1185.9 248.0 L1187.1 246.9 L1188.4 245.8 L1189.6 246.7 L1190.9 244.9 L1192.1 246.5 L1193.4 244.9 L1194.7 246.9 L1195.9 244.1 L1197.2 247.9 L1198.4 244.5 L1199.7 245.5 L1200.9 247.3 L1202.1 244.1 L1203.3 247.3 L1204.5 246.2 L1205.7 247.1 L1206.9 245.5 L1208.1 245.7 L1209.5 243.2 L1210.9 236.9 L1212.3 234.3 L1213.5 232.0 L1214.7 226.1 L1215.9 225.3 L1217.1 219.7 L1218.3 219.8 L1219.5 214.4 L1220.7 212.8 L1222.1 210.8 L1223.5 204.2 L1224.9 200.8 L1226.1 202.1 L1227.3 197.2 L1228.5 199.6 L1229.7 195.9 L1230.9 198.8 L1232.1 194.3 L1233.3 195.4 L1234.5 196.5 L1235.7 192.4 L1236.8 195.8 L1238.0 191.5 L1239.2 194.9 L1240.3 191.4 L1241.5 193.1 L1242.7 189.6 L1243.8 190.5 L1245.0 191.0 L1246.2 188.7 L1247.4 189.9 L1248.6 187.0 L1249.7 189.9 L1250.9 187.6 L1252.1 190.5 L1253.3 188.2 L1254.3 186.2 L1256.4 186.4 L1257.5 309.6 L1258.7 309.6 L1259.9 309.6 L1261.1 309.6 L1262.3 309.6 L1263.5 309.6 L1264.7 309.6 L1265.9 309.6 L1267.1 309.6 L1268.3 309.6 L1269.5 309.6 L1270.7 309.6 L1271.9 309.6 L1273.1 309.6 L1274.3 309.6 L1275.9 307.0 L1277.4 305.5 L1278.7 305.6 L1279.9 301.0 L1281.1 299.6 L1282.3 296.4 L1283.6 296.0 L1284.8 290.8 L1286.0 292.5 L1287.3 286.7 L1288.5 287.5 L1289.7 283.4 L1290.9 283.8 L1292.2 281.7 L1293.3 278.4 L1294.5 279.5 L1295.7 275.8 L1296.8 275.7 L1298.0 271.2 L1299.2 270.0 L1300.3 264.6 L1301.5 264.8 L1302.7 262.4 L1303.9 260.2 L1305.1 259.6 L1306.3 256.6 L1307.5 256.7 L1308.7 253.1 L1309.9 252.8 L1311.1 250.1 L1312.2 249.5 L1313.4 251.0 L1314.6 249.0 L1315.7 251.2 L1316.9 249.2 L1318.1 251.5 L1319.2 248.9 L1320.4 249.1 L1321.6 248.1" fill="none" stroke="#1d3f66" stroke-width="1.15" stroke-linejoin="round" stroke-linejoin="miter" stroke-miterlimit="2"/><path d="M493 174.0V310" stroke="#de5c9a" stroke-width="1.7"/><path d="M487 310.0H493" stroke="#de5c9a" stroke-width="1.5"/><path d="M487 283.8H493" stroke="#de5c9a" stroke-width="1.5"/><path d="M487 257.7H493" stroke="#de5c9a" stroke-width="1.5"/><path d="M487 231.5H493" stroke="#de5c9a" stroke-width="1.5"/><path d="M487 205.4H493" stroke="#de5c9a" stroke-width="1.5"/><path d="M487 174.0H493" stroke="#de5c9a" stroke-width="1.5"/><path d="M493 486.5H1322" stroke="#e6e6e6" stroke-width="1"/><path d="M493 453.5H1322" stroke="#e6e6e6" stroke-width="1"/><path d="M493 421.5H1322" stroke="#e6e6e6" stroke-width="1"/><path d="M493 389.5H1322" stroke="#e6e6e6" stroke-width="1"/><path d="M493 356.5H1322" stroke="#e6e6e6" stroke-width="1"/><path d="M493 350.5H1322" stroke="#e6e6e6" stroke-width="1"/><path d="M577.5 350.0V485.5" stroke="#e6e6e6" stroke-width="1"/><path d="M680.5 350.0V485.5" stroke="#e6e6e6" stroke-width="1"/><path d="M784.5 350.0V485.5" stroke="#e6e6e6" stroke-width="1"/><path d="M888.5 350.0V485.5" stroke="#e6e6e6" stroke-width="1"/><path d="M992.5 350.0V485.5" stroke="#e6e6e6" stroke-width="1"/><path d="M1095.5 350.0V485.5" stroke="#e6e6e6" stroke-width="1"/><path d="M1199.5 350.0V485.5" stroke="#e6e6e6" stroke-width="1"/><path d="M1302.5 350.0V485.5" stroke="#e6e6e6" stroke-width="1"/><path d="M493.3 371.7 L495.1 368.0 L496.8 365.6 L498.6 361.4 L500.4 359.1 L502.1 354.7 L503.9 352.0 L505.8 351.9 L507.6 351.1 L509.5 351.7 L511.3 350.7 L512.9 350.8 L514.6 351.9 L516.2 351.2 L517.9 352.8 L519.5 352.1 L521.2 353.2 L523.0 357.1 L524.9 359.4 L526.7 363.6 L528.5 366.7 L530.4 369.5 L532.2 374.2 L534.1 376.4 L535.9 380.3 L538.4 386.4 L540.2 403.1 L542.1 417.9 L543.9 434.7 L545.8 450.5 L547.6 454.8 L549.3 460.9 L551.1 464.9 L552.8 470.4 L554.6 474.4 L556.4 480.5 L558.1 485.0 L559.8 485.0 L561.6 485.0 L563.3 485.0 L565.0 485.0 L566.7 485.0 L568.5 485.0 L570.2 485.0 L571.9 485.0 L573.6 485.0 L575.4 485.0 L577.1 478.2 L578.8 473.4 L580.5 465.9 L582.3 461.1 L584.0 453.8 L585.7 448.7 L587.4 441.4 L589.2 436.5 L590.9 428.8 L592.6 423.4 L594.2 422.8 L595.9 421.5 L597.5 420.9 L599.4 421.9 L601.2 421.4 L603.1 423.2 L604.9 423.4 L606.6 419.5 L608.2 417.2 L609.8 413.0 L611.5 410.7 L613.1 406.6 L614.8 403.7 L616.5 401.4 L618.3 397.5 L620.1 396.0 L621.8 391.8 L623.6 390.4 L625.3 386.1 L627.1 384.0 L628.9 381.6 L630.6 377.0 L632.4 374.8 L634.1 370.6 L635.9 368.9 L637.7 364.2 L639.4 361.8 L641.9 359.3 L643.5 359.9 L645.2 358.7 L646.8 359.7 L648.4 358.6 L650.1 359.9 L651.7 359.0 L653.4 359.6 L655.0 358.6 L656.7 359.3 L658.3 362.6 L659.9 364.0 L661.6 367.4 L663.2 368.8 L664.9 372.0 L666.5 374.1 L668.4 377.4 L670.2 382.2 L672.1 384.5 L673.9 388.9 L676.4 396.3 L678.1 409.8 L679.8 422.3 L681.5 436.4 L683.3 448.9 L685.0 462.8 L686.8 466.9 L688.7 469.5 L690.5 474.7 L692.4 477.1 L694.2 482.1 L696.1 485.0 L697.8 485.0 L699.4 485.0 L701.1 485.0 L702.8 485.0 L704.5 485.0 L706.2 485.0 L707.8 485.0 L709.5 485.0 L711.2 485.0 L712.9 485.0 L714.6 485.0 L716.2 478.3 L717.8 472.7 L719.4 465.6 L721.0 460.1 L722.6 453.3 L724.2 447.7 L725.8 440.4 L727.4 435.0 L729.0 428.2 L730.6 422.2 L732.2 423.1 L733.9 422.2 L735.5 423.6 L737.1 422.3 L738.8 423.6 L740.4 423.4 L742.1 420.9 L743.7 419.8 L745.3 416.7 L747.0 415.7 L748.6 412.6 L750.3 411.1 L751.9 408.4 L753.6 403.7 L755.2 401.7 L756.8 397.5 L758.5 395.3 L760.1 391.4 L761.8 388.2 L763.4 386.1 L765.0 382.1 L766.7 380.5 L768.3 376.7 L769.9 374.6 L771.6 371.5 L773.4 367.5 L775.3 364.9 L777.2 360.6 L779.1 357.8 L781.0 353.7 L783.1 353.1 L785.2 353.7 L787.0 353.4 L788.7 352.0 L790.5 352.6 L792.2 350.9 L794.0 351.4 L795.7 350.5 L797.5 350.6 L799.2 352.6 L801.0 352.6 L802.9 356.4 L804.8 360.8 L806.6 364.0 L808.5 369.4 L810.4 372.6 L812.2 374.3 L813.9 377.2 L815.7 378.9 L817.8 392.0 L819.9 406.6 L822.0 419.8 L823.7 429.2 L825.5 439.8 L827.2 449.3 L828.9 452.6 L830.6 457.4 L832.3 460.2 L834.0 464.8 L835.6 468.2 L838.8 485.4 L840.5 485.4 L842.3 485.4 L844.1 485.4 L845.8 485.4 L847.6 485.4 L849.3 485.4 L851.1 485.4 L852.8 485.4 L854.6 485.4 L856.4 478.4 L858.3 472.8 L860.2 465.7 L862.1 460.5 L864.0 453.5 L865.7 446.6 L867.4 440.8 L869.1 433.2 L870.7 427.8 L872.4 420.9 L874.1 420.7 L875.8 421.6 L877.5 420.7 L879.2 421.7 L881.0 421.2 L882.7 422.1 L884.4 421.1 L886.1 421.9 L887.8 418.2 L889.6 412.8 L891.3 409.6 L893.1 404.7 L894.8 401.5 L896.6 396.7 L898.3 393.6 L900.1 392.3 L901.8 389.0 L903.6 387.2 L905.3 384.0 L907.1 382.0 L908.9 378.7 L910.7 374.1 L912.5 371.9 L914.3 367.3 L916.1 364.4 L917.9 359.7 L919.7 356.8 L921.4 357.3 L923.1 355.9 L924.7 356.9 L926.4 356.1 L928.1 356.7 L929.8 355.5 L931.5 356.4 L933.1 355.6 L934.8 356.3 L936.5 355.8 L938.2 358.5 L939.9 362.5 L941.6 364.5 L943.2 368.7 L944.9 371.5 L946.6 374.7 L948.3 379.0 L950.0 380.9 L951.6 385.8 L953.3 388.3 L955.1 398.4 L956.8 410.1 L958.6 419.8 L960.3 432.4 L962.1 446.8 L963.8 459.8 L965.6 462.7 L967.4 467.7 L969.2 470.0 L971.0 474.7 L972.8 477.4 L974.6 481.8 L976.4 485.0 L978.1 485.0 L979.7 485.0 L981.3 485.0 L982.9 485.0 L984.6 485.0 L986.2 485.0 L987.8 485.0 L989.4 485.0 L991.0 485.0 L992.7 485.0 L994.3 485.0 L996.2 477.9 L998.1 471.8 L1000.0 464.3 L1001.9 458.5 L1003.7 451.4 L1005.5 444.7 L1007.3 439.7 L1009.0 432.8 L1010.8 428.2 L1012.5 420.8 L1014.3 415.6 L1015.9 416.2 L1017.6 414.6 L1019.2 415.7 L1020.9 414.8 L1022.5 415.5 L1024.2 414.4 L1025.8 414.6 L1027.5 411.7 L1029.2 407.4 L1030.9 405.3 L1032.6 401.0 L1034.3 398.9 L1036.1 394.3 L1037.8 392.0 L1039.5 388.3 L1041.2 384.8 L1043.0 382.7 L1044.8 378.4 L1046.5 376.4 L1048.3 372.2 L1050.1 369.4 L1051.9 367.1 L1053.7 363.6 L1055.5 362.2 L1057.4 358.6 L1059.2 357.0 L1061.0 353.7 L1063.1 351.9 L1065.2 351.6 L1066.8 352.1 L1068.5 350.6 L1070.1 351.4 L1071.8 350.5 L1073.4 351.7 L1075.0 350.6 L1076.7 351.1 L1078.3 350.3 L1079.9 350.5 L1081.6 354.4 L1083.3 356.8 L1085.0 361.1 L1086.6 363.3 L1088.3 367.3 L1090.4 371.4 L1092.5 374.8 L1094.6 378.9 L1096.7 390.4 L1098.8 404.7 L1100.9 418.2 L1103.0 432.5 L1105.1 439.7 L1107.2 445.7 L1109.3 453.5 L1111.2 458.9 L1113.0 462.7 L1114.9 468.2 L1116.7 472.4 L1118.2 485.4 L1119.8 485.4 L1121.4 485.4 L1123.1 485.4 L1124.7 485.4 L1126.4 485.4 L1128.0 485.4 L1129.6 485.4 L1131.3 485.4 L1132.9 485.4 L1134.6 485.4 L1136.2 478.6 L1137.9 473.0 L1139.6 465.8 L1141.3 460.4 L1143.0 453.5 L1144.6 446.6 L1146.3 441.3 L1148.0 434.2 L1149.7 428.7 L1151.4 421.9 L1153.2 422.0 L1155.0 423.1 L1156.8 422.2 L1158.6 423.6 L1160.4 423.2 L1162.2 424.1 L1164.0 424.1 L1165.7 419.8 L1167.5 416.9 L1169.2 411.8 L1171.0 409.1 L1172.7 404.1 L1174.5 400.9 L1176.3 398.5 L1178.1 394.5 L1179.9 392.4 L1181.7 388.4 L1183.5 386.5 L1185.3 382.5 L1187.1 379.9 L1188.8 377.4 L1190.6 373.1 L1192.3 370.8 L1194.1 366.8 L1195.8 364.8 L1197.6 361.0 L1199.7 352.6 L1201.4 352.4 L1203.1 353.1 L1204.7 352.2 L1206.4 353.3 L1208.1 351.8 L1209.8 353.0 L1211.5 351.9 L1213.1 353.3 L1214.8 352.3 L1216.5 352.6 L1218.3 356.7 L1220.1 359.5 L1221.9 364.1 L1223.7 366.4 L1225.5 371.4 L1227.3 373.5 L1229.1 377.8 L1231.2 382.6 L1233.3 385.6 L1235.4 390.4 L1237.3 403.6 L1239.2 415.4 L1241.1 428.8 L1243.0 440.7 L1244.9 453.5 L1246.8 457.5 L1248.7 460.4 L1250.5 465.0 L1252.4 468.3 L1254.3 472.4 L1257.5 485.4 L1259.2 485.4 L1260.8 485.4 L1262.5 485.4 L1264.2 485.4 L1265.9 485.4 L1267.6 485.4 L1269.2 485.4 L1270.9 485.4 L1272.6 485.4 L1274.3 485.4 L1276.1 478.2 L1278.0 469.8 L1279.8 463.3 L1281.6 455.6 L1283.3 449.1 L1285.0 443.7 L1286.7 436.4 L1288.4 431.1 L1290.1 424.1 L1292.2 417.7 L1294.3 412.5 L1296.0 413.2 L1297.8 411.7 L1299.5 413.0 L1301.3 411.8 L1303.0 412.7 L1304.8 412.5 L1306.4 409.1 L1308.1 407.5 L1309.8 403.7 L1311.5 401.8 L1313.2 398.8 L1314.8 394.8 L1316.5 392.9 L1318.2 388.5 L1319.9 385.8 L1321.6 382.0" fill="none" stroke="#ffbba3" stroke-width="1.0" stroke-linejoin="round" /><path d="M493 350.0V485.5" stroke="#ff7433" stroke-width="1.7"/><path d="M487 485.5H493" stroke="#ff7433" stroke-width="1.5"/><path d="M487 453.2H493" stroke="#ff7433" stroke-width="1.5"/><path d="M487 421.0H493" stroke="#ff7433" stroke-width="1.5"/><path d="M487 388.7H493" stroke="#ff7433" stroke-width="1.5"/><path d="M487 350.0H493" stroke="#ff7433" stroke-width="1.5"/><path d="M493 526H1322M493 661.6H1322" stroke="#ececec" stroke-width="1.2"/><path d="M577.5 526V661.6" stroke="#e6e6e6" stroke-width="1"/><path d="M680.5 526V661.6" stroke="#e6e6e6" stroke-width="1"/><path d="M784.5 526V661.6" stroke="#e6e6e6" stroke-width="1"/><path d="M888.5 526V661.6" stroke="#e6e6e6" stroke-width="1"/><path d="M992.5 526V661.6" stroke="#e6e6e6" stroke-width="1"/><path d="M1095.5 526V661.6" stroke="#e6e6e6" stroke-width="1"/><path d="M1199.5 526V661.6" stroke="#e6e6e6" stroke-width="1"/><path d="M1302.5 526V661.6" stroke="#e6e6e6" stroke-width="1"/><path d="M493.0 526.0 L557.5 526.0 L557.5 661.6 L574.5 661.6 L574.5 526.0 L697.5 526.0 L697.5 661.6 L714.5 661.6 L714.5 526.0 L837.5 526.0 L837.5 661.6 L854.5 661.6 L854.5 526.0 L977.5 526.0 L977.5 661.6 L995.5 661.6 L995.5 526.0 L1117.5 526.0 L1117.5 661.6 L1135.5 661.6 L1135.5 526.0 L1257.5 526.0 L1257.5 661.6 L1275.5 661.6 L1275.5 526.0 L1322.5 526.0" fill="none" stroke="#cfe3c4" stroke-width="1.0" stroke-linejoin="round" stroke-linejoin="miter"/><path d="M493 526V661.6" stroke="#78b85a" stroke-width="2"/><path d="M487 526H493M487 661.6H493" stroke="#78b85a" stroke-width="1.5"/><path d="M493 665.6H1322.5" stroke="#757575" stroke-width="2"/><path d="M493 665V670.5" stroke="#555" stroke-width="1.3"/><path d="M577 665V670.5" stroke="#555" stroke-width="1.3"/><path d="M680.8 665V670.5" stroke="#555" stroke-width="1.3"/><path d="M784.7 665V670.5" stroke="#555" stroke-width="1.3"/><path d="M888.7 665V670.5" stroke="#555" stroke-width="1.3"/><path d="M992.1 665V670.5" stroke="#555" stroke-width="1.3"/><path d="M1095.5 665V670.5" stroke="#555" stroke-width="1.3"/><path d="M1199.3 665V670.5" stroke="#555" stroke-width="1.3"/><path d="M1302.7 665V670.5" stroke="#555" stroke-width="1.3"/><path d="M1322 665V670.5" stroke="#555" stroke-width="1.3"/><path d="M493.0 733.7 L496.9 757.5 L500.6 733.8 L504.5 755.3 L508.3 734.2 L512.8 755.0 L516.1 732.6 L520.6 756.8 L523.2 735.2 L528.1 756.7 L532.1 732.8 L534.7 756.3 L537.3 732.9 L540.4 754.8 L544.1 733.6 L548.7 756.3 L552.8 733.8 L556.9 756.1 L560.1 735.3 L565.1 757.2 L569.4 733.2 L572.5 755.6 L575.2 734.6 L578.7 757.2 L582.1 735.2 L586.7 754.7 L589.8 735.0 L593.4 757.6 L596.9 732.5 L601.0 757.0 L604.2 732.6 L607.5 757.6 L611.9 732.7 L615.0 755.0 L617.7 734.7 L620.6 756.4 L624.2 732.9 L628.6 755.1 L632.7 732.6 L636.2 755.3 L639.4 735.2 L643.9 755.6 L648.6 732.9 L652.1 757.3 L656.2 732.6 L661.2 755.3 L664.3 734.6 L667.6 755.6 L670.3 732.6 L674.3 755.4 L678.3 733.4 L681.9 757.6 L685.6 734.0 L690.3 755.2 L693.2 735.0 L697.7 755.4 L700.7 734.5 L705.6 755.3 L710.4 734.9 L714.4 756.0 L717.2 732.4 L722.1 755.4 L726.4 733.1 L730.9 756.5 L734.2 732.8 L738.5 754.9 L741.5 734.0 L746.2 756.5 L749.4 735.1 L752.4 754.7 L755.5 733.6 L758.2 755.2 L761.6 734.0 L764.5 755.8 L769.2 735.2 L773.3 756.8 L777.3 732.7 L779.9 754.8 L784.6 734.4 L789.6 754.8 L793.6 733.7 L798.0 755.7 L803.0 732.5 L806.8 756.9 L811.6 734.5 L815.8 757.1 L820.6 733.4 L824.8 757.4 L829.5 733.6 L834.0 757.3 L837.9 734.2 L841.4 756.4 L845.4 732.5 L849.5 757.7 L854.2 734.5 L857.7 756.9 L861.6 733.6 L866.2 755.0 L870.6 732.4 L874.6 756.1 L877.7 734.4 L881.4 756.5 L886.2 733.1 L888.7 755.6 L892.9 732.9 L895.9 757.4 L900.0 733.6 L904.7 755.7 L908.9 732.9 L912.5 757.1 L917.3 734.9 L920.7 756.4 L924.0 732.7 L927.8 757.2 L932.4 734.4 L937.3 755.5 L940.2 733.7 L943.4 755.3 L946.9 734.2 L950.6 755.6 L955.2 735.2 L958.9 754.9 L961.5 734.9 L964.1 756.8 L968.0 733.2 L972.5 754.8 L975.3 733.7 L977.9 757.2 L981.0 732.7 L983.6 756.6 L987.2 734.2 L991.3 757.1 L996.2 734.4 L999.2 756.1 L1002.2 732.3 L1005.9 756.8 L1008.8 733.1 L1012.2 756.8 L1016.0 734.1 L1020.4 755.9 L1024.8 735.0 L1027.6 757.5 L1031.9 732.7 L1035.5 756.6 L1040.3 733.4 L1044.2 757.3 L1048.7 735.1 L1052.3 756.7 L1055.4 734.5 L1059.9 756.6 L1064.2 732.9 L1068.9 757.6 L1073.9 733.9 L1078.4 755.7 L1083.1 734.9 L1086.5 754.9 L1090.1 734.0 L1094.5 756.2 L1097.1 734.7 L1099.8 757.1 L1102.7 733.3 L1107.2 755.1 L1110.0 733.8 L1114.3 757.2 L1118.6 735.1 L1122.3 757.5 L1125.0 733.0 L1128.8 755.6 L1133.2 734.2 L1137.0 757.2 L1140.9 733.2 L1144.3 757.2 L1149.1 732.9 L1153.7 757.6 L1157.5 734.0 L1160.5 756.3 L1164.3 734.1 L1166.8 757.6 L1170.6 733.5 L1175.1 756.4 L1178.9 734.4 L1181.5 756.3 L1185.1 735.2 L1189.9 755.5 L1193.5 732.7 L1197.1 757.1 L1201.9 733.7 L1205.2 755.3 L1209.2 735.1 L1212.0 757.0 L1214.6 732.9 L1217.7 756.8 L1221.0 733.4 L1225.0 755.0 L1229.3 732.7 L1233.1 755.5 L1236.1 733.9 L1239.7 755.8 L1243.2 733.9 L1246.1 755.3 L1250.2 734.2 L1254.0 757.3 L1258.1 734.9 L1261.2 756.9 L1265.7 735.0 L1269.0 755.6 L1273.8 733.0 L1278.8 757.4 L1281.6 733.0 L1285.9 755.5 L1288.7 734.8 L1292.2 757.1 L1295.0 733.5 L1299.3 754.8 L1302.3 734.3 L1307.0 757.6 L1309.8 733.8 L1314.2 756.2 L1318.4 732.9 L1321.1 755.0" fill="none" stroke="#f0a3bb" stroke-width="0.9" stroke-linejoin="round" /><path d="M493.0 733.7 L498.0 756.7 L501.4 732.3 L505.5 755.5 L511.0 734.4 L515.8 756.4 L520.7 732.7 L525.1 755.2 L530.8 732.5 L536.2 754.9 L541.3 733.3 L545.5 757.2 L548.6 732.5 L554.3 756.2 L557.6 735.3 L563.4 755.0 L567.7 732.7 L571.6 756.6 L575.1 734.4 L578.3 755.2 L583.7 733.5 L588.0 756.5 L592.4 733.5 L595.5 756.9 L601.4 735.2 L606.4 755.8 L610.5 734.4 L615.5 755.0 L619.2 733.4 L623.7 757.1 L628.2 732.4 L633.7 756.0 L638.3 733.0 L642.6 755.9 L647.9 732.6 L652.5 755.2 L657.6 732.4 L661.4 755.7 L666.3 732.5 L670.7 755.3 L674.6 733.7 L680.4 756.1 L686.3 732.8 L692.1 755.8 L695.7 734.5 L701.4 754.7 L705.2 734.6 L709.2 755.4 L712.2 732.4 L717.1 757.7 L723.1 733.8 L726.2 755.7 L731.5 734.8 L736.5 755.4 L741.0 733.7 L745.9 755.5 L751.8 735.0 L755.2 755.6 L760.9 733.1 L766.7 756.2 L771.8 734.4 L775.4 755.6 L779.2 734.3 L784.3 755.1 L789.9 733.6 L793.7 756.0 L799.6 734.0 L804.5 757.5 L810.4 734.6 L814.6 756.5 L820.3 734.7 L825.0 755.7 L829.2 734.5 L833.8 754.8 L839.0 735.0 L844.4 757.4 L850.1 733.9 L855.5 755.8 L858.8 733.4 L862.7 757.5 L867.8 733.9 L872.6 755.1 L877.2 734.4 L881.4 755.4 L885.6 733.3 L890.7 755.1 L894.0 733.2 L899.1 757.0 L904.0 735.1 L908.1 754.8 L912.6 733.6 L916.1 756.7 L920.2 733.0 L924.1 757.5 L927.2 733.4 L931.0 755.3 L935.3 733.0 L941.1 756.2 L946.1 732.8 L950.5 756.5 L956.1 733.0 L960.4 757.3 L965.9 733.0 L970.6 757.0 L974.7 734.3 L979.7 757.6 L984.4 734.3 L988.4 756.9 L992.4 733.8 L996.5 755.6 L999.9 733.0 L1004.5 755.5 L1007.7 734.7 L1011.5 757.5 L1016.3 733.5 L1021.9 757.4 L1025.9 732.7 L1030.8 757.2 L1035.7 734.7 L1039.9 756.6 L1043.7 733.5 L1047.8 755.9 L1052.0 734.7 L1055.5 755.3 L1059.3 735.2 L1063.9 754.9 L1069.4 734.9 L1074.8 755.8 L1080.0 733.2 L1083.4 757.3 L1088.9 732.9 L1094.6 754.8 L1098.5 732.3 L1102.0 755.2 L1107.2 733.2 L1110.7 755.3 L1114.7 734.9 L1119.5 755.0 L1124.6 733.9 L1128.9 756.3 L1133.9 734.7 L1138.4 756.6 L1142.8 734.2 L1146.9 755.9 L1151.5 734.4 L1155.3 757.5 L1159.8 734.9 L1164.9 757.6 L1169.9 733.6 L1174.1 756.5 L1179.4 734.8 L1182.8 754.9 L1186.1 732.6 L1189.3 754.7 L1193.0 732.6 L1198.1 756.5 L1204.0 735.2 L1209.2 757.5 L1212.3 733.0 L1218.1 756.1 L1221.7 734.6 L1226.0 756.3 L1229.9 733.0 L1233.2 756.5 L1239.0 735.3 L1244.3 757.5 L1248.4 733.2 L1254.2 756.5 L1259.2 732.3 L1262.9 756.1 L1268.1 734.8 L1273.3 755.7 L1277.5 734.9 L1283.5 756.2 L1287.0 734.2 L1291.7 755.8 L1295.3 733.5 L1300.2 755.1 L1304.8 735.2 L1310.0 755.5 L1314.3 732.6 L1319.5 756.6" fill="none" stroke="#7088a8" stroke-width="0.9" stroke-linejoin="round" /><path d="M493.0 733.1 L495.4 756.8 L497.9 732.9 L499.7 755.1 L501.4 734.5 L503.0 756.3 L504.7 733.2 L506.7 757.2 L508.9 732.3 L510.7 755.1 L513.3 734.7 L515.9 757.2 L518.3 735.1 L520.8 755.5 L523.4 733.8 L525.9 756.4 L527.9 733.4 L529.9 755.6 L531.4 734.8 L533.9 757.7 L536.3 734.0 L538.8 755.1 L541.1 733.6 L542.8 755.3 L544.9 733.1 L546.9 756.5 L548.9 732.7 L551.0 755.4 L552.7 732.9 L554.6 754.9 L556.9 735.2 L558.9 756.9 L561.6 732.4 L563.2 757.1 L565.7 734.2 L567.4 755.9 L570.0 735.0 L572.5 755.3 L575.1 733.4 L577.5 755.1 L580.3 734.1 L582.7 755.3 L584.9 734.0 L587.2 755.8 L589.6 733.3 L591.4 755.2 L593.8 732.6 L595.5 754.9 L597.8 734.0 L599.9 754.8 L602.0 733.3 L603.5 754.7 L606.3 732.7 L608.1 755.5 L610.3 732.5 L612.4 755.8 L615.0 732.3 L616.8 756.2 L619.6 733.9 L621.7 756.7 L623.5 732.4 L625.6 757.4 L628.0 733.1 L630.4 757.2 L632.1 734.1 L634.0 755.4 L635.8 732.9 L637.7 754.8 L639.7 732.6 L642.1 756.5 L643.5 734.6 L645.2 756.1 L647.4 733.3 L649.2 756.0 L650.8 734.9 L652.3 757.2 L654.0 733.2 L656.0 754.8 L657.6 733.4 L659.6 757.3 L662.4 732.4 L664.5 755.1 L667.0 733.3 L669.7 756.3 L671.3 732.3 L673.0 757.3 L674.6 733.7 L676.6 755.7 L679.1 732.9 L681.5 756.7 L684.2 733.9 L686.9 756.0 L689.1 734.2 L691.7 757.4 L693.2 732.7 L695.4 757.1 L697.5 733.2 L700.3 755.6 L701.8 732.5 L703.2 756.9 L704.8 734.4 L707.4 757.7 L709.9 733.6 L712.2 757.2 L714.6 733.2 L717.1 755.0 L718.9 735.3 L721.0 755.5 L723.4 733.7 L724.9 754.8 L726.6 733.3 L729.3 755.4 L731.9 734.9 L733.9 757.7 L736.4 733.8 L738.1 756.1 L740.8 733.9 L742.5 755.8 L744.5 732.9 L746.7 754.8 L749.3 732.8 L750.8 756.5 L752.7 735.0 L754.8 756.3 L757.3 732.9 L759.8 756.6 L761.8 735.2 L763.2 757.3 L764.8 734.8 L766.4 754.9 L768.5 735.1 L770.3 756.2 L772.5 733.0 L774.7 754.7 L776.7 734.6 L778.6 755.4 L780.0 734.4 L782.0 757.4 L784.5 732.6 L787.2 757.5 L789.7 734.8 L792.1 756.9 L794.4 734.1 L796.2 755.1 L798.6 734.1 L800.0 756.6 L802.3 733.8 L804.8 757.3 L806.7 734.7 L808.8 756.4 L810.8 735.1 L812.8 757.6 L814.7 734.3 L817.4 756.8 L819.3 732.5 L821.4 755.9 L823.9 734.7 L826.7 756.0 L828.7 734.0 L831.1 754.9 L832.8 732.7 L834.7 755.6 L837.4 732.9 L840.1 755.6 L841.8 735.2 L843.3 755.0 L844.9 732.5 L846.9 755.3 L848.5 732.3 L850.9 754.8 L852.6 734.0 L855.2 756.7 L857.6 734.4 L860.1 757.3 L861.7 732.5 L864.0 756.3 L866.1 734.6 L867.8 756.8 L869.8 733.6 L871.5 755.5 L873.7 734.0 L876.4 755.5 L878.8 732.6 L881.1 755.2 L883.7 735.2 L885.5 757.1 L887.2 733.2 L888.7 756.0 L890.3 734.4 L892.5 756.0 L894.9 733.0 L896.7 755.8 L898.1 735.0 L899.7 755.0 L902.2 734.8 L904.2 756.0 L905.8 732.3 L907.9 755.4 L909.6 735.0 L911.0 755.8 L913.4 734.5 L915.0 756.9 L917.2 734.2 L919.9 757.1 L922.1 734.6 L924.2 756.4 L926.8 734.2 L928.7 754.8 L931.2 733.3 L933.2 755.6 L935.4 733.5 L937.9 756.5 L940.1 734.6 L942.1 756.3 L944.6 734.5 L947.0 757.4 L949.2 734.0 L950.9 755.4 L952.9 733.8 L955.5 754.8 L957.4 734.5 L959.5 757.2 L961.1 734.6 L963.1 756.4 L964.6 733.5 L967.1 756.9 L969.3 733.6 L970.7 756.8 L972.8 734.5 L975.0 755.9 L977.7 732.7 L980.4 755.0 L983.2 734.1 L985.2 757.5 L987.3 733.8 L988.8 757.1 L991.1 733.0 L992.6 756.0 L995.3 734.9 L997.4 754.8 L1000.0 732.9 L1002.4 756.2 L1005.1 732.7 L1007.6 756.9 L1009.1 734.0 L1010.9 756.8 L1013.6 734.3 L1015.7 756.5 L1017.5 733.7 L1019.0 756.9 L1020.5 733.9 L1022.2 756.4 L1023.6 732.4 L1025.9 756.9 L1028.6 734.3 L1031.4 755.1 L1033.6 734.2 L1035.3 755.1 L1037.0 733.9 L1039.5 756.8 L1041.7 732.5 L1044.1 756.2 L1045.8 734.2 L1047.5 755.6 L1049.6 734.6 L1051.1 756.0 L1052.8 734.3 L1055.4 755.5 L1057.8 733.7 L1059.5 755.5 L1061.6 734.7 L1063.9 754.7 L1066.4 734.0 L1068.4 755.4 L1070.4 734.4 L1072.2 755.1 L1074.8 733.6 L1076.3 757.4 L1077.8 733.4 L1080.1 756.7 L1082.8 732.8 L1085.0 757.3 L1087.0 734.4 L1089.1 756.8 L1091.8 733.3 L1094.2 755.7 L1096.9 734.6 L1099.5 757.3 L1101.7 735.2 L1103.3 756.4 L1104.8 734.0 L1107.2 755.6 L1109.7 733.6 L1111.4 755.3 L1113.6 733.5 L1115.1 755.6 L1117.9 733.7 L1120.2 756.0 L1121.7 734.1 L1123.4 755.1 L1125.7 734.3 L1127.1 757.5 L1128.5 732.8 L1130.4 757.1 L1132.8 734.5 L1134.8 757.4 L1136.4 735.2 L1137.9 755.2 L1140.3 734.6 L1142.7 755.4 L1145.3 733.8 L1147.0 755.0 L1149.8 732.5 L1151.5 755.8 L1154.1 734.8 L1156.7 756.6 L1158.1 734.5 L1159.8 757.5 L1162.5 732.5 L1165.0 755.4 L1166.5 734.9 L1168.5 755.6 L1170.7 732.5 L1172.7 756.6 L1175.3 732.7 L1178.0 755.0 L1179.7 733.3 L1181.3 755.0 L1183.6 733.5 L1185.3 756.2 L1186.8 734.3 L1189.6 756.1 L1191.6 733.5 L1193.5 755.9 L1195.1 733.2 L1197.5 756.1 L1199.0 732.7 L1201.6 755.8 L1204.2 734.2 L1206.4 755.8 L1208.6 733.5 L1210.8 757.5 L1212.3 732.9 L1215.0 757.5 L1217.5 734.9 L1219.1 756.9 L1220.6 734.8 L1222.6 756.2 L1224.7 732.9 L1226.9 757.3 L1228.9 733.6 L1230.9 755.3 L1232.6 734.8 L1235.4 755.8 L1237.2 733.3 L1239.8 755.5 L1241.5 733.2 L1243.0 755.1 L1244.7 734.3 L1247.4 755.5 L1249.2 734.1 L1250.7 755.0 L1252.9 733.7 L1254.8 755.9 L1256.2 733.1 L1257.8 755.4 L1259.3 734.7 L1260.8 755.9 L1262.4 732.9 L1264.9 757.6 L1267.6 733.3 L1269.8 756.0 L1271.3 733.6 L1273.5 755.9 L1276.0 733.6 L1277.8 757.4 L1280.0 733.1 L1282.7 756.1 L1285.0 733.7 L1287.6 756.9 L1289.6 733.4 L1292.1 757.2 L1294.3 734.9 L1296.4 755.9 L1298.3 733.1 L1299.9 757.5 L1302.1 732.6 L1303.8 756.0 L1306.3 734.9 L1308.8 755.6 L1310.8 735.1 L1312.7 756.6 L1314.2 733.7 L1316.3 757.4 L1319.0 734.6 L1320.9 757.3" fill="none" stroke="#ff9a66" stroke-width="1.0" stroke-linejoin="round" /><path d="M493.0 759.2 L493.0 730.8 L496.0 730.8 L496.0 759.2 L497.3 759.2 L497.3 730.8 L501.5 730.8 L501.5 759.2 L502.7 759.2 L502.7 730.8 L506.5 730.8 L506.5 759.2 L508.3 759.2 L508.3 730.8 L510.3 730.8 L510.3 759.2 L512.4 759.2 L512.4 730.8 L514.4 730.8 L514.4 759.2 L516.3 759.2 L516.3 730.8 L518.4 730.8 L518.4 759.2 L519.6 759.2 L519.6 730.8 L522.9 730.8 L522.9 759.2 L525.8 759.2 L525.8 730.8 L528.0 730.8 L528.0 759.2 L529.5 759.2 L529.5 730.8 L533.6 730.8 L533.6 759.2 L536.7 759.2 L536.7 730.8 L540.6 730.8 L540.6 759.2 L542.5 759.2 L542.5 730.8 L547.9 730.8 L547.9 759.2 L549.0 759.2 L549.0 730.8 L554.0 730.8 L554.0 759.2 L555.6 759.2 L555.6 730.8 L558.0 730.8 L558.0 759.2 L559.2 759.2 L559.2 730.8 L562.2 730.8 L562.2 759.2 L565.0 759.2 L565.0 730.8 L567.4 730.8 L567.4 759.2 L569.7 759.2 L569.7 730.8 L573.9 730.8 L573.9 759.2 L575.7 759.2 L575.7 730.8 L579.5 730.8 L579.5 759.2 L580.7 759.2 L580.7 730.8 L582.7 730.8 L582.7 759.2 L584.1 759.2 L584.1 730.8 L588.5 730.8 L588.5 759.2 L590.4 759.2 L590.4 730.8 L593.4 730.8 L593.4 759.2 L595.7 759.2 L595.7 730.8 L599.1 730.8 L599.1 759.2 L600.8 759.2 L600.8 730.8 L605.5 730.8 L605.5 759.2 L608.1 759.2 L608.1 730.8 L610.8 730.8 L610.8 759.2 L613.0 759.2 L613.0 730.8 L616.8 730.8 L616.8 759.2 L619.7 759.2 L619.7 730.8 L624.2 730.8 L624.2 759.2 L625.8 759.2 L625.8 730.8 L631.3 730.8 L631.3 759.2 L632.5 759.2 L632.5 730.8 L635.9 730.8 L635.9 759.2 L638.5 759.2 L638.5 730.8 L640.9 730.8 L640.9 759.2 L643.0 759.2 L643.0 730.8 L644.9 730.8 L644.9 759.2 L647.4 759.2 L647.4 730.8 L652.0 730.8 L652.0 759.2 L654.3 759.2 L654.3 730.8 L659.3 730.8 L659.3 759.2 L661.0 759.2 L661.0 730.8 L665.4 730.8 L665.4 759.2 L667.7 759.2 L667.7 730.8 L671.6 730.8 L671.6 759.2 L673.6 759.2 L673.6 730.8 L678.5 730.8 L678.5 759.2 L681.6 759.2 L681.6 730.8 L685.2 730.8 L685.2 759.2 L687.6 759.2 L687.6 730.8 L689.7 730.8 L689.7 759.2 L692.2 759.2 L692.2 730.8 L696.4 730.8 L696.4 759.2 L699.6 759.2 L699.6 730.8 L704.4 730.8 L704.4 759.2 L706.1 759.2 L706.1 730.8 L709.3 730.8 L709.3 759.2 L711.8 759.2 L711.8 730.8 L713.6 730.8 L713.6 759.2 L715.7 759.2 L715.7 730.8 L718.1 730.8 L718.1 759.2 L719.3 759.2 L719.3 730.8 L721.3 730.8 L721.3 759.2 L724.0 759.2 L724.0 730.8 L726.3 730.8 L726.3 759.2 L727.9 759.2 L727.9 730.8 L731.1 730.8 L731.1 759.2 L734.0 759.2 L734.0 730.8 L736.1 730.8 L736.1 759.2 L738.1 759.2 L738.1 730.8 L741.9 730.8 L741.9 759.2 L744.9 759.2 L744.9 730.8 L749.7 730.8 L749.7 759.2 L752.6 759.2 L752.6 730.8 L755.5 730.8 L755.5 759.2 L757.4 759.2 L757.4 730.8 L760.5 730.8 L760.5 759.2 L763.4 759.2 L763.4 730.8 L768.8 730.8 L768.8 759.2 L770.1 759.2 L770.1 730.8 L772.6 730.8 L772.6 759.2 L774.1 759.2 L774.1 730.8 L776.7 730.8 L776.7 759.2 L778.8 759.2 L778.8 730.8 L782.8 730.8 L782.8 759.2 L784.4 759.2 L784.4 730.8 L786.2 730.8 L786.2 759.2 L788.1 759.2 L788.1 730.8 L791.3 730.8 L791.3 759.2 L793.5 759.2 L793.5 730.8 L798.8 730.8 L798.8 759.2 L801.4 759.2 L801.4 730.8 L805.1 730.8 L805.1 759.2 L807.4 759.2 L807.4 730.8 L811.7 730.8 L811.7 759.2 L812.8 759.2 L812.8 730.8 L818.0 730.8 L818.0 759.2 L820.7 759.2 L820.7 730.8 L825.7 730.8 L825.7 759.2 L828.5 759.2 L828.5 730.8 L831.7 730.8 L831.7 759.2 L833.6 759.2 L833.6 730.8 L835.8 730.8 L835.8 759.2 L838.2 759.2 L838.2 730.8 L840.2 730.8 L840.2 759.2 L841.4 759.2 L841.4 730.8 L843.9 730.8 L843.9 759.2 L845.3 759.2 L845.3 730.8 L848.4 730.8 L848.4 759.2 L849.5 759.2 L849.5 730.8 L851.3 730.8 L851.3 759.2 L852.6 759.2 L852.6 730.8 L854.8 730.8 L854.8 759.2 L856.6 759.2 L856.6 730.8 L858.5 730.8 L858.5 759.2 L861.4 759.2 L861.4 730.8 L865.5 730.8 L865.5 759.2 L866.8 759.2 L866.8 730.8 L869.5 730.8 L869.5 759.2 L871.3 759.2 L871.3 730.8 L874.4 730.8 L874.4 759.2 L875.7 759.2 L875.7 730.8 L880.7 730.8 L880.7 759.2 L883.8 759.2 L883.8 730.8 L887.4 730.8 L887.4 759.2 L889.4 759.2 L889.4 730.8 L891.5 730.8 L891.5 759.2 L892.8 759.2 L892.8 730.8 L895.8 730.8 L895.8 759.2 L897.4 759.2 L897.4 730.8 L902.3 730.8 L902.3 759.2 L903.6 759.2 L903.6 730.8 L905.5 730.8 L905.5 759.2 L908.6 759.2 L908.6 730.8 L912.4 730.8 L912.4 759.2 L913.7 759.2 L913.7 730.8 L917.5 730.8 L917.5 759.2 L918.6 759.2 L918.6 730.8 L922.3 730.8 L922.3 759.2 L925.5 759.2 L925.5 730.8 L930.5 730.8 L930.5 759.2 L933.0 759.2 L933.0 730.8 L935.8 730.8 L935.8 759.2 L937.6 759.2 L937.6 730.8 L940.0 730.8 L940.0 759.2 L942.7 759.2 L942.7 730.8 L946.5 730.8 L946.5 759.2 L949.2 759.2 L949.2 730.8 L952.2 730.8 L952.2 759.2 L953.7 759.2 L953.7 730.8 L958.5 730.8 L958.5 759.2 L961.7 759.2 L961.7 730.8 L966.6 730.8 L966.6 759.2 L969.4 759.2 L969.4 730.8 L974.2 730.8 L974.2 759.2 L976.8 759.2 L976.8 730.8 L979.5 730.8 L979.5 759.2 L981.6 759.2 L981.6 730.8 L984.7 730.8 L984.7 759.2 L985.8 759.2 L985.8 730.8 L987.7 730.8 L987.7 759.2 L989.3 759.2 L989.3 730.8 L992.1 730.8 L992.1 759.2 L994.6 759.2 L994.6 730.8 L999.9 730.8 L999.9 759.2 L1001.9 759.2 L1001.9 730.8 L1007.2 730.8 L1007.2 759.2 L1010.4 759.2 L1010.4 730.8 L1015.7 730.8 L1015.7 759.2 L1017.5 759.2 L1017.5 730.8 L1020.1 730.8 L1020.1 759.2 L1021.6 759.2 L1021.6 730.8 L1024.1 730.8 L1024.1 759.2 L1025.6 759.2 L1025.6 730.8 L1029.7 730.8 L1029.7 759.2 L1032.7 759.2 L1032.7 730.8 L1037.6 730.8 L1037.6 759.2 L1039.6 759.2 L1039.6 730.8 L1043.9 730.8 L1043.9 759.2 L1046.6 759.2 L1046.6 730.8 L1048.7 730.8 L1048.7 759.2 L1051.2 759.2 L1051.2 730.8 L1056.3 730.8 L1056.3 759.2 L1059.1 759.2 L1059.1 730.8 L1063.6 730.8 L1063.6 759.2 L1065.7 759.2 L1065.7 730.8 L1068.2 730.8 L1068.2 759.2 L1070.9 759.2 L1070.9 730.8 L1073.9 730.8 L1073.9 759.2 L1076.7 759.2 L1076.7 730.8 L1082.1 730.8 L1082.1 759.2 L1083.9 759.2 L1083.9 730.8 L1087.2 730.8 L1087.2 759.2 L1090.3 759.2 L1090.3 730.8 L1094.8 730.8 L1094.8 759.2 L1096.2 759.2 L1096.2 730.8 L1098.4 730.8 L1098.4 759.2 L1099.8 759.2 L1099.8 730.8 L1104.9 730.8 L1104.9 759.2 L1107.7 759.2 L1107.7 730.8 L1110.0 730.8 L1110.0 759.2 L1112.9 759.2 L1112.9 730.8 L1118.3 730.8 L1118.3 759.2 L1120.7 759.2 L1120.7 730.8 L1123.8 730.8 L1123.8 759.2 L1126.0 759.2 L1126.0 730.8 L1128.3 730.8 L1128.3 759.2 L1129.3 759.2 L1129.3 730.8 L1134.7 730.8 L1134.7 759.2 L1137.2 759.2 L1137.2 730.8 L1140.9 730.8 L1140.9 759.2 L1144.0 759.2 L1144.0 730.8 L1147.4 730.8 L1147.4 759.2 L1150.3 759.2 L1150.3 730.8 L1155.2 730.8 L1155.2 759.2 L1156.6 759.2 L1156.6 730.8 L1159.3 730.8 L1159.3 759.2 L1161.0 759.2 L1161.0 730.8 L1163.7 730.8 L1163.7 759.2 L1166.0 759.2 L1166.0 730.8 L1168.7 730.8 L1168.7 759.2 L1170.7 759.2 L1170.7 730.8 L1172.9 730.8 L1172.9 759.2 L1175.9 759.2 L1175.9 730.8 L1179.1 730.8 L1179.1 759.2 L1181.1 759.2 L1181.1 730.8 L1185.0 730.8 L1185.0 759.2 L1188.0 759.2 L1188.0 730.8 L1191.4 730.8 L1191.4 759.2 L1194.4 759.2 L1194.4 730.8 L1198.0 730.8 L1198.0 759.2 L1200.2 759.2 L1200.2 730.8 L1203.9 730.8 L1203.9 759.2 L1205.0 759.2 L1205.0 730.8 L1208.4 730.8 L1208.4 759.2 L1209.8 759.2 L1209.8 730.8 L1211.6 730.8 L1211.6 759.2 L1214.4 759.2 L1214.4 730.8 L1216.8 730.8 L1216.8 759.2 L1218.9 759.2 L1218.9 730.8 L1223.4 730.8 L1223.4 759.2 L1225.6 759.2 L1225.6 730.8 L1228.6 730.8 L1228.6 759.2 L1230.7 759.2 L1230.7 730.8 L1234.6 730.8 L1234.6 759.2 L1237.3 759.2 L1237.3 730.8 L1239.5 730.8 L1239.5 759.2 L1241.7 759.2 L1241.7 730.8 L1244.4 730.8 L1244.4 759.2 L1246.1 759.2 L1246.1 730.8 L1250.7 730.8 L1250.7 759.2 L1252.8 759.2 L1252.8 730.8 L1256.7 730.8 L1256.7 759.2 L1259.4 759.2 L1259.4 730.8 L1264.6 730.8 L1264.6 759.2 L1266.5 759.2 L1266.5 730.8 L1270.6 730.8 L1270.6 759.2 L1272.7 759.2 L1272.7 730.8 L1276.4 730.8 L1276.4 759.2 L1278.9 759.2 L1278.9 730.8 L1282.4 730.8 L1282.4 759.2 L1284.6 759.2 L1284.6 730.8 L1288.1 730.8 L1288.1 759.2 L1291.2 759.2 L1291.2 730.8 L1295.6 730.8 L1295.6 759.2 L1298.5 759.2 L1298.5 730.8 L1303.8 730.8 L1303.8 759.2 L1305.4 759.2 L1305.4 730.8 L1309.3 730.8 L1309.3 759.2 L1312.3 759.2 L1312.3 730.8 L1317.2 730.8 L1317.2 759.2 L1318.5 759.2 L1318.5 730.8 L1320.8 730.8 L1320.8 759.2 L1322.0 759.2 L1322.0 730.8" fill="none" stroke="#7fbf66" stroke-width="1.0" stroke-linejoin="round" stroke-linejoin="miter" stroke-miterlimit="10"/><path d="M1321 729V775" stroke="#666" stroke-width="1"/><rect x="1319.2" y="737" width="3.4" height="18" rx="1" fill="#222"/><rect x="1319.6" y="757" width="2.6" height="10" fill="#aaa"/><path d="M493 773.6H1322.5" stroke="#777" stroke-width="2"/><path d="M493 773V778" stroke="#555" stroke-width="1.3"/><path d="M540.3 773V778" stroke="#555" stroke-width="1.3"/><path d="M675.4 773V778" stroke="#555" stroke-width="1.3"/><path d="M814.7 773V778" stroke="#555" stroke-width="1.3"/><path d="M949.9 773V778" stroke="#555" stroke-width="1.3"/><path d="M1089.5 773V778" stroke="#555" stroke-width="1.3"/><path d="M1228.8 773V778" stroke="#555" stroke-width="1.3"/><path d="M1322 773V778" stroke="#555" stroke-width="1.3"/></svg>
<div class="r" style="left:492.7px;top:141.2px;width:86.80px;height:24.10px;background:#fff;border:1px solid #dcdcdc;border-radius:3px"></div><div class="r" style="left:497.00px;top:148.25px;width:10px;height:10px;border-radius:50%;background:#c8005a"></div>
<svg style="left:563.8px;top:147.2px" width="12" height="12" viewBox="0 0 12 12"><path d="M6 0.5V11.5M0.5 6H11.5" stroke="#333" stroke-width="1.3"/><path d="M6 0L4 2.5H8ZM6 12L4 9.5H8ZM0 6L2.5 4V8ZM12 6L9.5 4V8Z" fill="#333"/></svg>
<div class="r" style="left:583.3px;top:141.2px;width:89.50px;height:24.10px;background:#fff;border:1px solid #dcdcdc;border-radius:3px"></div><div class="r" style="left:587.60px;top:148.25px;width:10px;height:10px;border-radius:50%;background:#1d3f66"></div>
<svg style="left:657.2px;top:147.2px" width="12" height="12" viewBox="0 0 12 12"><path d="M6 0.5V11.5M0.5 6H11.5" stroke="#333" stroke-width="1.3"/><path d="M6 0L4 2.5H8ZM6 12L4 9.5H8ZM0 6L2.5 4V8ZM12 6L9.5 4V8Z" fill="#333"/></svg>
<div class="r" style="left:492.8px;top:318px;width:59.60px;height:23.60px;background:#fff;border:1px solid #dcdcdc;border-radius:3px"></div><div class="r" style="left:497.10px;top:324.80px;width:10px;height:10px;border-radius:50%;background:#ff5510"></div>
<svg style="left:537.2px;top:323.8px" width="12" height="12" viewBox="0 0 12 12"><path d="M6 0.5V11.5M0.5 6H11.5" stroke="#333" stroke-width="1.3"/><path d="M6 0L4 2.5H8ZM6 12L4 9.5H8ZM0 6L2.5 4V8ZM12 6L9.5 4V8Z" fill="#333"/></svg>
<div class="r" style="left:492.5px;top:493.5px;width:72.10px;height:24.50px;background:#fff;border:1px solid #dcdcdc;border-radius:3px"></div><div class="r" style="left:496.80px;top:500.75px;width:10px;height:10px;border-radius:50%;background:#2b8a10"></div>
<svg style="left:548.8px;top:499.9px" width="12" height="12" viewBox="0 0 12 12"><path d="M6 0.5V11.5M0.5 6H11.5" stroke="#333" stroke-width="1.3"/><path d="M6 0L4 2.5H8ZM6 12L4 9.5H8ZM0 6L2.5 4V8ZM12 6L9.5 4V8Z" fill="#333"/></svg>
<div class="r" style="left:493.2px;top:690.2px;width:31.50px;height:31.20px;background:#fff;border:1px solid #dcdcdc;border-radius:4px"></div>
<svg style="left:505px;top:701px" width="8" height="10" viewBox="0 0 8 10"><path d="M5.5 2L2.2 5L5.5 8Z" fill="#333"/></svg>
<div class="r" style="left:529.6px;top:690.2px;width:32.00px;height:31.20px;background:#fff;border:1px solid #dcdcdc;border-radius:4px"></div>
<svg style="left:537.6px;top:698px" width="16" height="16" viewBox="0 0 16 16"><rect x="1.5" y="2.5" width="13" height="12" rx="1" fill="none" stroke="#888" stroke-width="1.2"/><path d="M1.5 5.8H14.5" stroke="#888" stroke-width="1.2"/><path d="M4.5 1V4M11.5 1V4" stroke="#888" stroke-width="1.3"/><rect x="9.3" y="10" width="3" height="2.8" fill="#888"/></svg>
<div class="r" style="left:566.4px;top:690.2px;width:32.20px;height:31.20px;background:#fff;border:1px solid #c9d6e3;border-radius:4px"></div>
<svg style="left:574.5px;top:698px" width="16" height="16" viewBox="0 0 16 16"><circle cx="8" cy="8" r="6.8" fill="none" stroke="#888" stroke-width="1.2"/><path d="M8 3.8V8.3H11.5" fill="none" stroke="#888" stroke-width="1.2"/></svg>
<div class="r" style="left:820.3px;top:690.2px;width:31.00px;height:31.20px;background:#fff;border:1px solid #dcdcdc;border-radius:4px"></div>
<svg style="left:827px;top:697px" width="18" height="18" viewBox="0 0 18 18"><path d="M1.8 1.5V16.2H17" fill="none" stroke="#555" stroke-width="1"/><path d="M3 9.5Q5 6.5 8 6.3Q11 6 12.5 4.5Q14 2.5 15.5 2.3M3 8.3H15.5" fill="none" stroke="#555" stroke-width="1"/><path d="M3 15.5L6 13.5L8.5 13L10 11.5L12.5 11L13.5 9.5H15.5" fill="none" stroke="#555" stroke-width="0.9"/></svg>
<div class="r" style="left:856.2px;top:690.2px;width:102.20px;height:31.20px;background:#fff;border:1px solid #dcdcdc;border-radius:4px"></div>
<div class="r" style="left:927.4px;top:691px;width:1.00px;height:30.00px;background:#dcdcdc"></div>
<svg style="left:936px;top:697px" width="14" height="17" viewBox="0 0 14 17"><path d="M3.5 7.5V5Q3.5 1.3 7 1.3Q10.5 1.3 10.5 5" fill="none" stroke="#555" stroke-width="1.5"/><rect x="1.8" y="7.5" width="10.4" height="8.5" rx="1" fill="none" stroke="#555" stroke-width="1.5"/><circle cx="7" cy="11.7" r="1.2" fill="#555"/></svg>
<div class="r" style="left:963.6px;top:690.2px;width:30.80px;height:31.20px;background:#fff;border:1px solid #ececec;border-radius:4px"></div>
<svg style="left:971px;top:698px" width="16" height="16" viewBox="0 0 16 16"><path d="M3 8A5.5 5.5 0 1 0 4.8 3.8" fill="none" stroke="#d0d0d0" stroke-width="1.3"/><path d="M1.5 5.5L3 8.5L5.5 6" fill="none" stroke="#d0d0d0" stroke-width="1.2"/><path d="M8.5 5V8.5H11" fill="none" stroke="#d0d0d0" stroke-width="1.2"/></svg>
<div class="r" style="left:1221.5px;top:690.2px;width:32.00px;height:31.20px;background:#fff;border:1px solid #dcdcdc;border-radius:4px"></div>
<svg style="left:1229.5px;top:698px" width="16" height="16" viewBox="0 0 16 16"><rect x="1.5" y="2.5" width="13" height="12" rx="1" fill="none" stroke="#888" stroke-width="1.2"/><path d="M1.5 5.8H14.5" stroke="#888" stroke-width="1.2"/><path d="M4.5 1V4M11.5 1V4" stroke="#888" stroke-width="1.3"/><rect x="9.3" y="10" width="3" height="2.8" fill="#888"/></svg>
<div class="r" style="left:1258.4px;top:690.2px;width:32.10px;height:31.20px;background:#fff;border:1px solid #c9d6e3;border-radius:4px"></div>
<svg style="left:1266.4px;top:698px" width="16" height="16" viewBox="0 0 16 16"><circle cx="8" cy="8" r="6.8" fill="none" stroke="#888" stroke-width="1.2"/><path d="M8 3.8V8.3H11.5" fill="none" stroke="#888" stroke-width="1.2"/></svg>
<div class="r" style="left:1290.5px;top:690.2px;width:31.20px;height:31.20px;background:#fff;border:1px solid #dcdcdc;border-radius:4px"></div>
<svg style="left:1302px;top:701px" width="8" height="10" viewBox="0 0 8 10"><path d="M2.5 2L5.8 5L2.5 8Z" fill="#333"/></svg>
<div class="r" style="left:493.3px;top:798.9px;width:243.40px;height:22.40px;background:#fff;border:1px solid #dcdcdc;border-radius:3px"></div>
<div class="r" style="left:633.2px;top:799.9px;width:35.20px;height:20.40px;background:#eef4fa"></div>
<div class="r" style="left:526.4px;top:799.9px;width:1.00px;height:20.40px;background:#e2e2e2"></div>
<div class="r" style="left:562.5px;top:799.9px;width:1.00px;height:20.40px;background:#e2e2e2"></div>
<div class="r" style="left:597.7px;top:799.9px;width:1.00px;height:20.40px;background:#e2e2e2"></div>
<div class="r" style="left:633.2px;top:799.9px;width:1.00px;height:20.40px;background:#e2e2e2"></div>
<div class="r" style="left:668.4px;top:799.9px;width:1.00px;height:20.40px;background:#e2e2e2"></div>
<div class="r" style="left:700px;top:799.9px;width:1.00px;height:20.40px;background:#e2e2e2"></div>
<div class="r" style="left:754px;top:798.4px;width:102.70px;height:23.10px;background:#fff;border:1px solid #dcdcdc;border-radius:3px"></div>
<div class="r" style="left:833.8px;top:799.4px;width:1.00px;height:21.10px;background:#e2e2e2"></div>
<svg style="left:819px;top:806px" width="9" height="6" viewBox="0 0 9 6"><path d="M0 5.5H9L4.5 0Z" fill="#a0a0a0"/></svg>
<svg style="left:839px;top:803px" width="14" height="13" viewBox="0 0 14 13"><rect x="1" y="1.5" width="12" height="10" rx="1" fill="none" stroke="#777" stroke-width="1.1"/><path d="M3 4.5V3.5H4.5M11 4.5V3.5H9.5M3 8.5V9.5H4.5M11 8.5V9.5H9.5" fill="none" stroke="#777" stroke-width="1"/></svg>
<div class="t" style="left:94.2px;top:46.38px;font-size:15.5px;font-weight:bold;color:#1b2356;transform:scaleX(0.9076);transform-origin:left">Trend</div>
<div class="t" style="left:130.4px;top:46.38px;font-size:15.5px;font-weight:normal;color:#1b2356;transform:scaleX(1.0340);transform-origin:left">Hub</div>
<div class="t" style="left:246.7px;top:48.65px;font-size:14px;font-weight:normal;color:#2a66b8;transform:scaleX(0.9772);transform-origin:left">Search tags &amp; attributes</div>
<div class="t" style="left:840.3px;top:48.05px;font-size:14px;font-weight:normal;color:#2f6cc0;transform:scaleX(0.9774);transform-origin:left">Home</div>
<div class="t" style="left:901.5px;top:48.05px;font-size:14px;font-weight:normal;color:#292929;transform:scaleX(0.9930);transform-origin:left">Work organizer</div>
<div class="t" style="left:1020.0px;top:48.05px;font-size:14px;font-weight:normal;color:#292929;transform:scaleX(1.0357);transform-origin:left">Monitoring</div>
<div class="t" style="left:1229.3px;top:47.52px;font-size:12.5px;font-weight:normal;color:#fff;transform:scaleX(0.9790);transform-origin:center">NA</div>
<div class="t" style="left:1263.5px;top:47.45px;font-size:14px;font-weight:normal;color:#292929;transform:scaleX(0.9965);transform-origin:left">Nicky</div>
<div class="t" style="left:122.2px;top:95.25px;font-size:14px;font-weight:bold;color:#292929;transform:scaleX(0.9361);transform-origin:left">TAGS &amp; ATTRIBUTES</div>
<div class="t" style="left:141.0px;top:142.05px;font-size:14px;font-weight:bold;color:#292929;transform:scaleX(0.9545);transform-origin:left">ACTIVE</div>
<div class="t" style="left:123.4px;top:189.65px;font-size:14px;font-weight:normal;color:#292929;transform:scaleX(0.9379);transform-origin:left">GROUP 1</div>
<div class="t" style="left:139.4px;top:236.35px;font-size:14px;font-weight:normal;color:#292929;transform:scaleX(0.9478);transform-origin:left">BA:TEMP.1</div>
<div class="t" style="left:123.0px;top:255.84px;font-size:12px;font-weight:normal;color:#a0a0a0;transform:scaleX(0.9729);transform-origin:left">Temperature Reactor 1</div>
<div class="t" style="left:139.4px;top:300.25px;font-size:14px;font-weight:normal;color:#292929;transform:scaleX(0.9607);transform-origin:left">BA:CONC.1</div>
<div class="t" style="left:123.0px;top:320.04px;font-size:12px;font-weight:normal;color:#707070;transform:scaleX(0.9818);transform-origin:left">Concentration Reactor 1</div>
<div class="t" style="left:123.2px;top:354.14px;font-size:12px;font-weight:bold;color:#292929;transform:scaleX(0.9367);transform-origin:left">Type</div>
<div class="t" style="left:183.3px;top:354.14px;font-size:12px;font-weight:normal;color:#666;transform:scaleX(0.9581);transform-origin:left">Analog</div>
<div class="t" style="left:123.2px;top:370.74px;font-size:12px;font-weight:bold;color:#292929;transform:scaleX(0.9267);transform-origin:left">Units</div>
<div class="t" style="left:183.3px;top:370.74px;font-size:12px;font-weight:normal;color:#666;transform:scaleX(0.9120);transform-origin:left">DEG. C</div>
<div class="t" style="left:123.2px;top:387.54px;font-size:12px;font-weight:bold;color:#292929;transform:scaleX(0.8898);transform-origin:left">Source</div>
<div class="t" style="left:183.3px;top:387.54px;font-size:12px;font-weight:normal;color:#666;transform:scaleX(0.9912);transform-origin:left">PI2016</div>
<div class="t" style="left:123.2px;top:404.94px;font-size:12px;font-weight:bold;color:#292929;transform:scaleX(0.9141);transform-origin:left">Indexing</div>
<div class="t" style="left:183.3px;top:404.94px;font-size:12px;font-weight:normal;color:#666;transform:scaleX(0.9951);transform-origin:left">Up to date</div>
<div class="t" style="left:123.2px;top:433.64px;font-size:12px;font-weight:bold;color:#292929;transform:scaleX(0.9302);transform-origin:left">Shift</div>
<div class="t" style="left:238.0px;top:434.34px;font-size:12px;font-weight:normal;color:#b0b0b0;transform:scaleX(0.9640);transform-origin:left">eg. 30m</div>
<div class="t" style="left:326.6px;top:253.58px;font-size:15.5px;font-weight:bold;color:#fff;transform:scaleX(0.9259);transform-origin:left">Tag details</div>
<div class="t" style="left:139.4px;top:481.65px;font-size:14px;font-weight:normal;color:#292929;transform:scaleX(0.9352);transform-origin:left">Level</div>
<div class="t" style="left:123.0px;top:500.84px;font-size:12px;font-weight:normal;color:#a0a0a0;transform:scaleX(0.9591);transform-origin:left">Reactor1</div>
<div class="t" style="left:139.4px;top:544.55px;font-size:14px;font-weight:normal;color:#292929;transform:scaleX(0.9414);transform-origin:left">ACTIVE</div>
<div class="t" style="left:123.0px;top:563.34px;font-size:12px;font-weight:normal;color:#a8a8a8;transform:scaleX(0.9835);transform-origin:left">This attribute uses parameter su... titutions.</div>
<div class="t" style="left:123.0px;top:580.34px;font-size:12px;font-weight:normal;color:#a0a0a0;transform:scaleX(0.9591);transform-origin:left">Reactor1</div>
<div class="t" style="left:141.3px;top:654.45px;font-size:14px;font-weight:bold;color:#292929;transform:scaleX(0.9149);transform-origin:left">RECENTLY USED</div>
<div class="t" style="left:139.4px;top:701.95px;font-size:14px;font-weight:normal;color:#292929;transform:scaleX(0.9018);transform-origin:left">Phase</div>
<div class="t" style="left:123.0px;top:721.34px;font-size:12px;font-weight:normal;color:#a0a0a0;transform:scaleX(0.9591);transform-origin:left">Reactor1</div>
<div class="t" style="left:468.3px;top:94.95px;font-size:14px;font-weight:bold;color:#292929;transform:scaleX(0.8836);transform-origin:left">Statistics</div>
<div class="t" style="left:580.2px;top:94.95px;font-size:14px;font-weight:bold;color:#292929;transform:scaleX(0.9024);transform-origin:left">Compare layers</div>
<div class="t" style="left:839.0px;top:94.95px;font-size:14px;font-weight:bold;color:#292929;transform:scaleX(0.9597);transform-origin:left">My View name</div>
<div class="t" style="left:935.4px;top:94.95px;font-size:14px;font-weight:normal;color:#a6a6a6;transform:scaleX(0.9459);transform-origin:left">- Unsaved changes</div>
<div class="t" style="left:1249.0px;top:95.45px;font-size:14px;font-weight:normal;color:#292929;transform:scaleX(0.9954);transform-origin:left">Actions</div>
<div class="t" style="left:511.3px;top:147.19px;font-size:11px;font-weight:normal;color:#292929;transform:scaleX(0.8547);transform-origin:left">BA:TEMP.1</div>
<div class="t" style="left:601.4px;top:147.19px;font-size:11px;font-weight:normal;color:#292929;transform:scaleX(0.8720);transform-origin:left">BA:CONC.1</div>
<div class="t" style="left:511.3px;top:323.99px;font-size:11px;font-weight:normal;color:#292929;transform:scaleX(0.8252);transform-origin:left">Level</div>
<div class="t" style="left:511.0px;top:499.99px;font-size:11px;font-weight:normal;color:#292929;transform:scaleX(0.8558);transform-origin:left">ACTIVE</div>
<div class="t" style="left:471.6px;top:167.99px;font-size:11px;font-weight:normal;color:#292929;transform:scaleX(1.0298);transform-origin:right">52</div>
<div class="t" style="left:471.6px;top:199.49px;font-size:11px;font-weight:normal;color:#292929;transform:scaleX(1.0298);transform-origin:right">40</div>
<div class="t" style="left:471.6px;top:225.39px;font-size:11px;font-weight:normal;color:#292929;transform:scaleX(1.0298);transform-origin:right">30</div>
<div class="t" style="left:471.6px;top:251.49px;font-size:11px;font-weight:normal;color:#292929;transform:scaleX(1.0298);transform-origin:right">20</div>
<div class="t" style="left:471.6px;top:277.59px;font-size:11px;font-weight:normal;color:#292929;transform:scaleX(1.0298);transform-origin:right">10</div>
<div class="t" style="left:477.7px;top:303.89px;font-size:11px;font-weight:normal;color:#292929;transform:scaleX(1.0298);transform-origin:right">0</div>
<div class="t" style="left:471.6px;top:173.19px;font-size:11px;font-weight:normal;color:#aaa;transform:scaleX(1.0298);transform-origin:right">50</div>
<div class="t" style="left:471.6px;top:344.19px;font-size:11px;font-weight:normal;color:#292929;transform:scaleX(1.0298);transform-origin:right">42</div>
<div class="t" style="left:471.6px;top:382.99px;font-size:11px;font-weight:normal;color:#292929;transform:scaleX(1.0298);transform-origin:right">30</div>
<div class="t" style="left:471.6px;top:415.49px;font-size:11px;font-weight:normal;color:#292929;transform:scaleX(1.0298);transform-origin:right">20</div>
<div class="t" style="left:471.6px;top:447.69px;font-size:11px;font-weight:normal;color:#292929;transform:scaleX(1.0298);transform-origin:right">10</div>
<div class="t" style="left:477.7px;top:479.59px;font-size:11px;font-weight:normal;color:#292929;transform:scaleX(1.0298);transform-origin:right">0</div>
<div class="t" style="left:471.6px;top:350.59px;font-size:11px;font-weight:normal;color:#aaa;transform:scaleX(1.0298);transform-origin:right">40</div>
<div class="t" style="left:445.8px;top:520.61px;font-size:10.5px;font-weight:normal;color:#292929;transform:scaleX(0.9097);transform-origin:right">ACTIVE</div>
<div class="t" style="left:435.3px;top:656.41px;font-size:10.5px;font-weight:normal;color:#292929;transform:scaleX(0.9396);transform-origin:right">INACTIVE</div>
<div class="t" style="left:561.8px;top:670.61px;font-size:10.5px;font-weight:normal;color:#292929;transform:scaleX(0.9556);transform-origin:center">03 AM</div>
<div class="t" style="left:665.6px;top:670.61px;font-size:10.5px;font-weight:normal;color:#292929;transform:scaleX(0.9556);transform-origin:center">04 AM</div>
<div class="t" style="left:769.5px;top:670.61px;font-size:10.5px;font-weight:normal;color:#292929;transform:scaleX(0.9556);transform-origin:center">05 AM</div>
<div class="t" style="left:873.5px;top:670.61px;font-size:10.5px;font-weight:normal;color:#292929;transform:scaleX(0.9556);transform-origin:center">06 AM</div>
<div class="t" style="left:976.9px;top:670.61px;font-size:10.5px;font-weight:normal;color:#292929;transform:scaleX(0.9556);transform-origin:center">07 AM</div>
<div class="t" style="left:1080.3px;top:670.61px;font-size:10.5px;font-weight:normal;color:#292929;transform:scaleX(0.9556);transform-origin:center">08 AM</div>
<div class="t" style="left:1184.1px;top:670.61px;font-size:10.5px;font-weight:normal;color:#292929;transform:scaleX(0.9556);transform-origin:center">09 AM</div>
<div class="t" style="left:1287.5px;top:670.61px;font-size:10.5px;font-weight:normal;color:#292929;transform:scaleX(0.9556);transform-origin:center">10 AM</div>
<div class="t" style="left:869.0px;top:699.05px;font-size:14px;font-weight:normal;color:#292929;transform:scaleX(0.9765);transform-origin:left">8 hours</div>
<div class="t" style="left:531.0px;top:778.31px;font-size:10.5px;font-weight:normal;color:#292929;transform:scaleX(0.8564);transform-origin:center">Sep</div>
<div class="t" style="left:667.2px;top:778.31px;font-size:10.5px;font-weight:normal;color:#292929;transform:scaleX(0.9795);transform-origin:center">Oct</div>
<div class="t" style="left:805.4px;top:778.31px;font-size:10.5px;font-weight:normal;color:#292929;transform:scaleX(0.9640);transform-origin:center">Nov</div>
<div class="t" style="left:940.6px;top:778.31px;font-size:10.5px;font-weight:normal;color:#292929;transform:scaleX(0.9104);transform-origin:center">Dec</div>
<div class="t" style="left:1077.8px;top:778.31px;font-size:10.5px;font-weight:normal;color:#292929;transform:scaleX(0.9418);transform-origin:center">2022</div>
<div class="t" style="left:1219.8px;top:778.31px;font-size:10.5px;font-weight:normal;color:#292929;transform:scaleX(0.8843);transform-origin:center">Feb</div>
<div class="t" style="left:501.5px;top:803.50px;font-size:13px;font-weight:normal;color:#292929;transform:scaleX(1.0000);transform-origin:center">1D</div>
<div class="t" style="left:534.7px;top:803.50px;font-size:13px;font-weight:normal;color:#292929;transform:scaleX(1.0000);transform-origin:center">1W</div>
<div class="t" style="left:571.1px;top:803.50px;font-size:13px;font-weight:normal;color:#292929;transform:scaleX(1.0000);transform-origin:center">1M</div>
<div class="t" style="left:606.4px;top:803.50px;font-size:13px;font-weight:normal;color:#292929;transform:scaleX(1.0000);transform-origin:center">3M</div>
<div class="t" style="left:641.8px;top:803.50px;font-size:13px;font-weight:normal;color:#2f6cc0;transform:scaleX(1.0000);transform-origin:center">6M</div>
<div class="t" style="left:676.2px;top:803.50px;font-size:13px;font-weight:normal;color:#292929;transform:scaleX(1.0000);transform-origin:center">1Y</div>
<div class="t" style="left:706.8px;top:803.50px;font-size:13px;font-weight:normal;color:#292929;transform:scaleX(1.0000);transform-origin:center">ALL</div>
<div class="t" style="left:763.0px;top:803.50px;font-size:13px;font-weight:normal;color:#292929;transform:scaleX(0.8914);transform-origin:left">CUSTOM</div>
<script>
(function(){
var c=document.getElementById('bg'),x=c.getContext('2d');
var img=x.createImageData(1380,900),d=img.data;
var s=987654321;function r(){s^=s<<13;s^=s>>>17;s^=s<<5;return ((s>>>0)%100000)/100000;}
for(var i=0;i<d.length;i+=4){d[i]=0;d[i+1]=0;d[i+2]=0;d[i+3]=255;}
var L=50,T=30,R=1330,B=830;
var OL=5,OT=5,OR=1375,OB=893,RAD=50;
for(var y=0;y<900;y++){for(var xx=0;xx<1380;xx++){
  if(xx>=L&&xx<R&&y>=T&&y<B)continue;
  var px=xx+0.5,py=y+0.5;
  var ddx=Math.max(L-px,px-R,0),ddy=Math.max(T-py,py-B,0);
  var dW=Math.sqrt(ddx*ddx+ddy*ddy);
  var cx=(OL+OR)/2,cy=(OT+OB)/2,hx=(OR-OL)/2-RAD,hy=(OB-OT)/2-RAD;
  var qx=Math.abs(px-cx)-hx,qy=Math.abs(py-cy)-hy;
  var sd=Math.sqrt(Math.max(qx,0)*Math.max(qx,0)+Math.max(qy,0)*Math.max(qy,0))+Math.min(Math.max(qx,qy),0)-RAD;
  if(sd>0)continue;
  var t=dW/(dW-sd);
  var p=0.2+0.2*t;
  if(r()<p){
    var u=Math.min(1,Math.max(0,(t-0.72)/0.22));u=u*u*(3-2*u);
    var b=15+85*t*t*t+145*u;
    b=b*(0.75+0.25*r());
    var i=(y*1380+xx)*4;d[i]=b;d[i+1]=b;d[i+2]=b;
  }
}}
x.putImageData(img,0,0);
})();
</script>
</body></html>
